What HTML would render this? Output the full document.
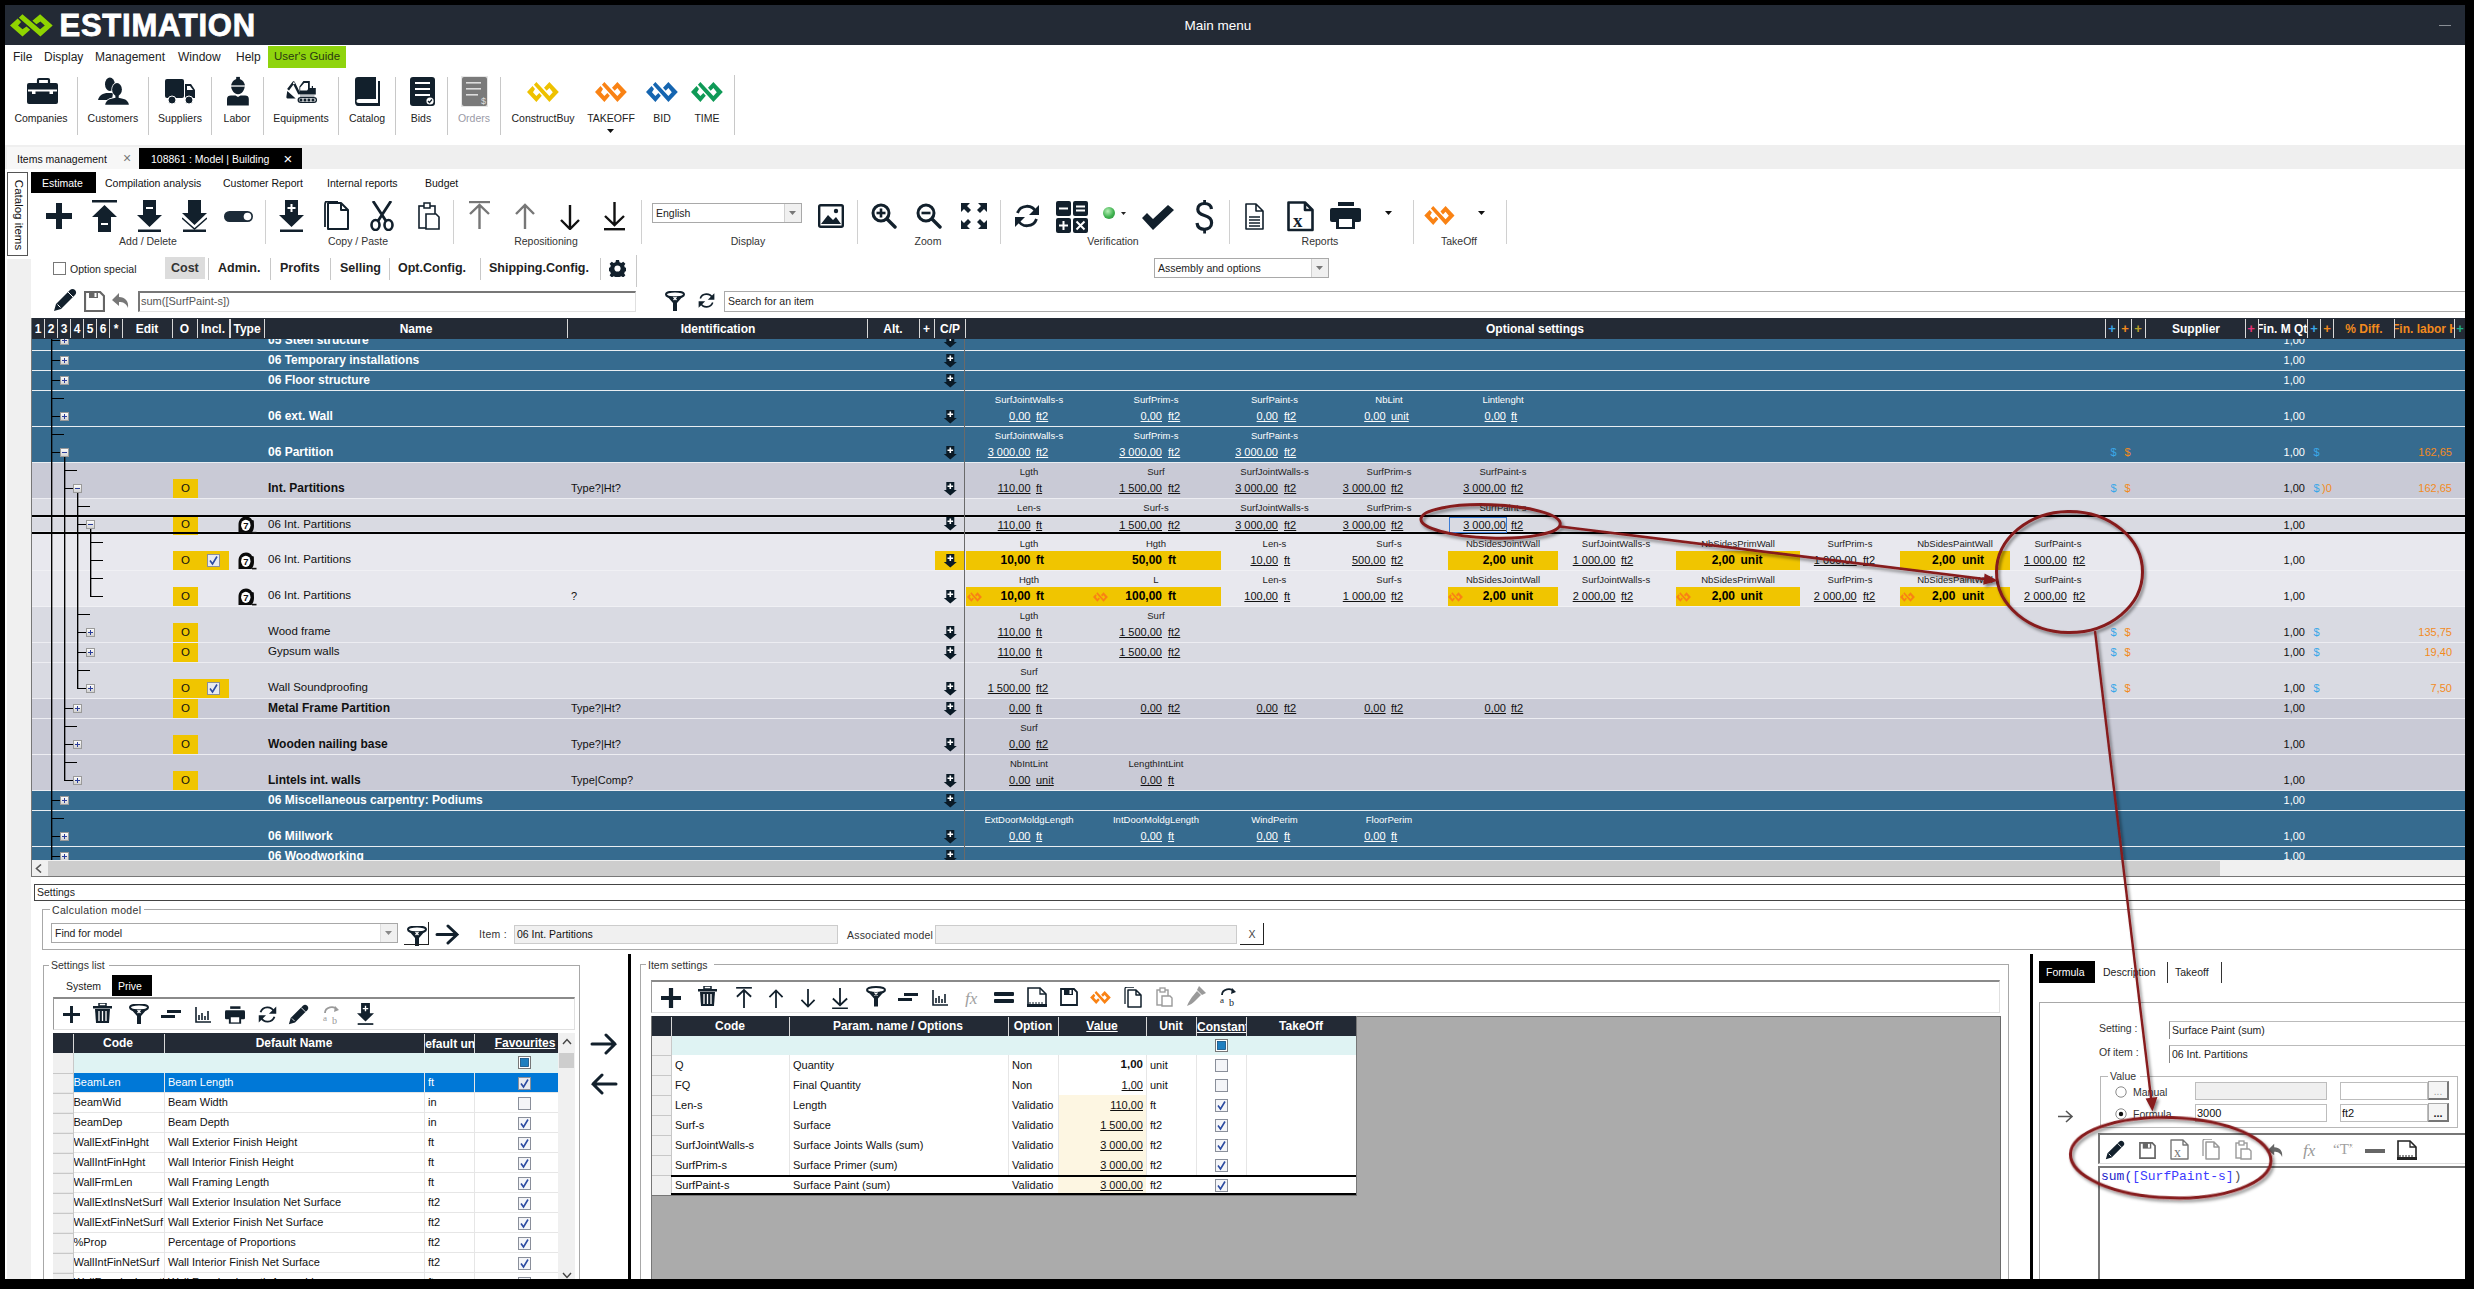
<!DOCTYPE html>
<html><head><meta charset="utf-8"><title>Estimation</title><style>
html,body{margin:0;padding:0;}
body{width:2474px;height:1289px;position:relative;overflow:hidden;background:#000;font-family:"Liberation Sans",sans-serif;}
.t{position:absolute;white-space:pre;line-height:1;}
.r{position:absolute;}
.u{text-decoration:underline;text-underline-offset:1px;text-decoration-skip-ink:none;}
</style></head><body>
<div class="r" style="left:5px;top:5px;width:2460px;height:1274px;background:#fff;"></div>
<div class="r" style="left:5px;top:5px;width:2460px;height:40px;background:#232a35;"></div>
<svg class="r" style="left:10px;top:14px;" width="43" height="22.5" viewBox="0 0 43 22.5"><polygon fill="#8fd400" points="8.84,3.69 12.4,0.26 30.1,15.2 34.8,11.6 30.4,7.4 26.4,10.2 22.4,6.7 30.1,0.26 42.7,11.6 30.4,22.4"/><polygon fill="#8fd400" points="7.7,4.5 11.1,7.9 8.05,11.6 12.5,15.3 16.5,12.5 20.2,15.8 12.5,22.4 0,11.6"/></svg>
<div class="t " style="top:9.76px;font-size:31px;color:#fff;font-weight:bold;left:59.5px;letter-spacing:0.75px;-webkit-text-stroke:0.8px #fff;">ESTIMATION</div>
<div class="t " style="top:18.57px;font-size:13.5px;color:#fff;left:1118.00px;width:200px;text-align:center;">Main menu</div>
<div class="r" style="left:2439px;top:25px;width:12px;height:1px;background:#8a8f96;"></div>
<div class="t " style="top:50.84px;font-size:12px;color:#222;left:13px;">File</div>
<div class="t " style="top:50.84px;font-size:12px;color:#222;left:44px;">Display</div>
<div class="t " style="top:50.84px;font-size:12px;color:#222;left:95px;">Management</div>
<div class="t " style="top:50.84px;font-size:12px;color:#222;left:178px;">Window</div>
<div class="t " style="top:50.84px;font-size:12px;color:#222;left:236px;">Help</div>
<div class="r" style="left:268px;top:46px;width:78px;height:22px;background:#8fd40d;"></div>
<div class="t " style="top:51.27px;font-size:11.5px;color:#2a3a10;left:274px;">User's Guide</div>
<svg class="r" style="left:27px;top:79px;overflow:visible;" width="31" height="25" viewBox="0 0 31 25"><rect x="11" y="0" width="11" height="6" rx="1" fill="none" stroke="#12202c" stroke-width="2.2"/><rect x="0" y="4" width="31" height="21" rx="2" fill="#12202c"/><rect x="1" y="10.5" width="29" height="2" fill="#fff"/><rect x="5" y="12" width="3.5" height="3" fill="#fff"/><rect x="22.5" y="12" width="3.5" height="3" fill="#fff"/></svg>
<div class="t " style="top:113.11px;font-size:10.5px;color:#222;left:-19.00px;width:120px;text-align:center;">Companies</div>
<svg class="r" style="left:98px;top:77px;overflow:visible;" width="31" height="28" viewBox="0 0 31 28"><ellipse cx="11.9" cy="7.15" rx="4.9" ry="6.75" fill="#12202c"/><path d="M0,23 C1,18.5 5,16 10,16 L15,16 L14,23Z" fill="#12202c"/><ellipse cx="19" cy="12.5" rx="5.6" ry="7.2" fill="#fff"/><path d="M6.2,28.5 C7,22.5 11,20.2 19,20.2 C27,20.2 31,22.5 31.9,28.5Z" fill="#fff"/><ellipse cx="19" cy="12.5" rx="4.9" ry="6.5" fill="#12202c"/><rect x="17.4" y="17" width="3.3" height="5" fill="#12202c"/><path d="M7.2,27.7 C8,23 12,21 19,21 C26,21 30,23 30.9,27.7Z" fill="#12202c"/></svg>
<div class="t " style="top:113.11px;font-size:10.5px;color:#222;left:53.00px;width:120px;text-align:center;">Customers</div>
<svg class="r" style="left:165px;top:79px;overflow:visible;" width="31" height="26" viewBox="0 0 31 26"><rect x="0" y="0" width="19" height="19" rx="2" fill="#12202c"/><path d="M20,5 L26,5 L30,11 L30,19 L20,19Z" fill="#12202c"/><path d="M22,7 L25,7 L28,11 L22,11Z" fill="#fff"/><circle cx="7" cy="21" r="4" fill="#12202c" stroke="#fff" stroke-width="1"/><circle cx="24" cy="21" r="4" fill="#12202c" stroke="#fff" stroke-width="1"/></svg>
<div class="t " style="top:113.11px;font-size:10.5px;color:#222;left:120.00px;width:120px;text-align:center;">Suppliers</div>
<svg class="r" style="left:227px;top:76px;overflow:visible;" width="22" height="30" viewBox="0 0 22 30"><rect x="9.2" y="0.9" width="3.7" height="3" fill="#12202c"/><path d="M4.2,9.1 C5,5 8,2.7 11,2.7 C14,2.7 17,5 17.9,9.1Z" fill="#12202c"/><rect x="4.2" y="9.1" width="13.7" height="1.7" fill="#9aa0a6"/><path d="M4.2,11.1 L17.6,11.1 C17.4,14 15,18.3 11,18.3 C7,18.3 4.5,14 4.2,11.1Z" fill="#12202c"/><path d="M0,29.5 L0,23 C0,20.5 1.5,19.5 4,19.5 L8.5,19.5 L11,21 L13.5,19.5 L18,19.5 C20.5,19.5 21.8,20.5 21.8,23 L21.8,29.5Z" fill="#12202c"/></svg>
<div class="t " style="top:113.11px;font-size:10.5px;color:#222;left:177.00px;width:120px;text-align:center;">Labor</div>
<svg class="r" style="left:286px;top:80px;overflow:visible;" width="31" height="24" viewBox="0 0 31 24"><path d="M13.4,14.05 L7.6,2.4 L2.07,9.8" stroke="#12202c" stroke-width="2.4" fill="none" stroke-linejoin="round"/><circle cx="7.9" cy="3.3" r="1" fill="#fff"/><path d="M1.28,10.9 L9.7,18.5 L1.5,18.5 C0.5,18.5 0.2,17.5 0.5,16Z" fill="#12202c"/><path d="M17.4,1.1 L23.8,1.1 L23.8,8 L29.8,8 L29.8,14.6 L13.4,14.6 L13.4,6.4Z M18.2,3 L14.2,7.45 L14.2,10.6 L21.07,10.6 L22,9.3 L22,3Z" fill="#12202c" fill-rule="evenodd"/><rect x="25.8" y="6" width="1.2" height="2" fill="#12202c"/><rect x="14" y="15.6" width="14.5" height="0.9" fill="#5a6570"/><rect x="12.2" y="17.6" width="18.2" height="4.8" rx="2.4" fill="none" stroke="#12202c" stroke-width="1.3"/><circle cx="15" cy="20" r="1.6" fill="#12202c"/><circle cx="19" cy="20" r="1.6" fill="#12202c"/><circle cx="22.9" cy="20" r="1.6" fill="#12202c"/><circle cx="27" cy="20" r="1.6" fill="#12202c"/></svg>
<div class="t " style="top:113.11px;font-size:10.5px;color:#222;left:241.00px;width:120px;text-align:center;">Equipments</div>
<svg class="r" style="left:355px;top:77px;overflow:visible;" width="25" height="29" viewBox="0 0 25 29"><path d="M0,3 C0,1 1,0 3,0 L21,0 L21,22 L4,22 C2,22 1.5,23 1.5,24 C1.5,25 2,26 4,26 L23,26 L23,4 L25,4 L25,29 L3,29 C1,29 0,27 0,25Z" fill="#12202c"/></svg>
<div class="t " style="top:113.11px;font-size:10.5px;color:#222;left:307.00px;width:120px;text-align:center;">Catalog</div>
<svg class="r" style="left:410px;top:77px;overflow:visible;" width="25" height="29" viewBox="0 0 25 29"><rect x="0" y="0" width="25" height="29" rx="3" fill="#12202c"/><rect x="5" y="5" width="15" height="2" fill="#fff"/><rect x="5" y="11" width="15" height="2" fill="#fff"/><rect x="5" y="17" width="15" height="2" fill="#fff"/><circle cx="20" cy="24" r="3.6" fill="#fff"/><path d="M18,24 L19.5,25.5 L22,22.5" stroke="#12202c" stroke-width="1.2" fill="none"/></svg>
<div class="t " style="top:113.11px;font-size:10.5px;color:#222;left:361.00px;width:120px;text-align:center;">Bids</div>
<svg class="r" style="left:462px;top:77px;overflow:visible;" width="25" height="29" viewBox="0 0 25 29"><rect x="-1" y="-1" width="27" height="31" fill="#e6e6e6"/><rect x="0" y="0" width="25" height="29" rx="2" fill="#7a7a7a"/><rect x="4" y="5" width="15" height="1.6" fill="#ddd"/><rect x="4" y="11" width="15" height="1.6" fill="#ddd"/><rect x="4" y="17" width="12" height="1.6" fill="#ddd"/><text x="19" y="27" font-size="9" fill="#ddd" font-family="Liberation Sans">$</text></svg>
<div class="t " style="top:113.11px;font-size:10.5px;color:#9a9aa6;left:414.00px;width:120px;text-align:center;">Orders</div>
<div class="r" style="left:77px;top:77px;width:1px;height:58px;background:#c8c8c8;"></div>
<div class="r" style="left:148px;top:77px;width:1px;height:58px;background:#c8c8c8;"></div>
<div class="r" style="left:211px;top:77px;width:1px;height:58px;background:#c8c8c8;"></div>
<div class="r" style="left:263px;top:77px;width:1px;height:58px;background:#c8c8c8;"></div>
<div class="r" style="left:338px;top:77px;width:1px;height:58px;background:#c8c8c8;"></div>
<div class="r" style="left:395px;top:77px;width:1px;height:58px;background:#c8c8c8;"></div>
<div class="r" style="left:447px;top:77px;width:1px;height:58px;background:#c8c8c8;"></div>
<div class="r" style="left:500px;top:77px;width:1px;height:58px;background:#c8c8c8;"></div>
<svg class="r" style="left:527px;top:82px;" width="32" height="20" viewBox="0 0 32 20"><polygon fill="#eec100" points="6.93,2.72 9.38,0 22.4,14.0 25.8,10.3 22.4,6.11 19.7,8.83 17.0,5.84 22.4,0 31.8,10.05 22.4,19.97"/><polygon fill="#eec100" points="5.57,4.08 8.0,6.93 5.98,10.2 9.38,14.0 12.36,11.0 14.8,13.7 9.38,19.97 0,10.05"/></svg>
<div class="t " style="top:113.11px;font-size:10.5px;color:#222;left:483.00px;width:120px;text-align:center;">ConstructBuy</div>
<svg class="r" style="left:595px;top:82px;" width="32" height="20" viewBox="0 0 32 20"><polygon fill="#f98214" points="6.93,2.72 9.38,0 22.4,14.0 25.8,10.3 22.4,6.11 19.7,8.83 17.0,5.84 22.4,0 31.8,10.05 22.4,19.97"/><polygon fill="#f98214" points="5.57,4.08 8.0,6.93 5.98,10.2 9.38,14.0 12.36,11.0 14.8,13.7 9.38,19.97 0,10.05"/></svg>
<div class="t " style="top:113.11px;font-size:10.5px;color:#222;left:551.00px;width:120px;text-align:center;">TAKEOFF</div>
<svg class="r" style="left:646px;top:82px;" width="32" height="20" viewBox="0 0 32 20"><polygon fill="#1565b0" points="6.93,2.72 9.38,0 22.4,14.0 25.8,10.3 22.4,6.11 19.7,8.83 17.0,5.84 22.4,0 31.8,10.05 22.4,19.97"/><polygon fill="#1565b0" points="5.57,4.08 8.0,6.93 5.98,10.2 9.38,14.0 12.36,11.0 14.8,13.7 9.38,19.97 0,10.05"/></svg>
<div class="t " style="top:113.11px;font-size:10.5px;color:#222;left:602.00px;width:120px;text-align:center;">BID</div>
<svg class="r" style="left:691px;top:82px;" width="32" height="20" viewBox="0 0 32 20"><polygon fill="#0f9a57" points="6.93,2.72 9.38,0 22.4,14.0 25.8,10.3 22.4,6.11 19.7,8.83 17.0,5.84 22.4,0 31.8,10.05 22.4,19.97"/><polygon fill="#0f9a57" points="5.57,4.08 8.0,6.93 5.98,10.2 9.38,14.0 12.36,11.0 14.8,13.7 9.38,19.97 0,10.05"/></svg>
<div class="t " style="top:113.11px;font-size:10.5px;color:#222;left:647.00px;width:120px;text-align:center;">TIME</div>
<svg class="r" style="left:607px;top:129px;" width="7" height="4" viewBox="0 0 7 4"><path d="M0,0 L7,0 L3.5,4Z" fill="#111"/></svg>
<div class="r" style="left:734px;top:75px;width:1px;height:60px;background:#c8c8c8;"></div>
<div class="r" style="left:5px;top:145px;width:2460px;height:24px;background:#efefef;"></div>
<div class="r" style="left:7px;top:147px;width:132px;height:22px;background:#f7f7f7;"></div>
<div class="t " style="top:154.11px;font-size:10.5px;color:#111;left:17px;">Items management</div>
<div class="t " style="top:151.15px;font-size:14px;color:#777;left:117.00px;width:20px;text-align:center;">×</div>
<div class="r" style="left:139px;top:148px;width:163px;height:21px;background:#000;"></div>
<div class="t " style="top:154.11px;font-size:10.5px;color:#fff;left:151px;">108861 : Model | Building</div>
<div class="t " style="top:151.30px;font-size:15px;color:#fff;left:278.00px;width:20px;text-align:center;">×</div>
<div class="r" style="left:5px;top:169px;width:26px;height:1110px;background:#fff;"></div>
<div class="r" style="left:7px;top:259px;width:24px;height:1020px;background:#f0f0f0;"></div>
<div class="r" style="left:7px;top:172px;width:21px;height:84px;background:#fff;box-sizing:border-box;border:1px solid #555;"></div>
<div class="t" style="left:-22px;top:209px;width:80px;height:12px;font-size:11.5px;color:#111;transform:rotate(90deg);text-align:center;">Catalog items</div>
<div class="r" style="left:31px;top:172px;width:65px;height:21px;background:#000;"></div>
<div class="t " style="top:178.11px;font-size:10.5px;color:#fff;left:42px;">Estimate</div>
<div class="t " style="top:178.11px;font-size:10.5px;color:#111;left:105px;">Compilation analysis</div>
<div class="t " style="top:178.11px;font-size:10.5px;color:#111;left:223px;">Customer Report</div>
<div class="t " style="top:178.11px;font-size:10.5px;color:#111;left:327px;">Internal reports</div>
<div class="t " style="top:178.11px;font-size:10.5px;color:#111;left:425px;">Budget</div>
<svg class="r" style="left:46px;top:203px;" width="26" height="26" viewBox="0 0 26 26"><path d="M10.0,0 h6 v10.0 h10.0 v6 h-10.0 v10.0 h-6 v-10.0 h-10.0 v-6 h10.0Z" fill="#12202c"/></svg>
<svg class="r" style="left:92px;top:200px;" width="25" height="32" viewBox="0 0 25 32"><rect x="0" y="0" width="25" height="2.5" fill="#12202c"/><path d="M12.5,5 L25,17 L19,17 L19,32 L6,32 L6,17 L0,17Z" fill="#12202c"/><rect x="9" y="23" width="7" height="2" fill="#fff"/></svg>
<svg class="r" style="left:137px;top:200px;" width="25" height="32" viewBox="0 0 25 32"><path d="M6,0 L19,0 L19,15 L25,15 L12.5,27 L0,15 L6,15Z" fill="#12202c"/><rect x="9" y="7" width="7" height="2" fill="#fff"/><rect x="1" y="29.5" width="23" height="2.5" fill="#12202c"/></svg>
<svg class="r" style="left:182px;top:200px;" width="25" height="32" viewBox="0 0 25 32"><path d="M6,0 L19,0 L19,13 L25,13 L12.5,25 L0,13 L6,13Z" fill="#12202c"/><path d="M0,18 L12.5,29 L25,18" stroke="#12202c" stroke-width="1.5" fill="none"/><rect x="1" y="29.5" width="23" height="2.5" fill="#12202c"/></svg>
<svg class="r" style="left:224px;top:211px;" width="29" height="11" viewBox="0 0 29 11"><rect x="0" y="0" width="29" height="11" rx="5.5" fill="#1c2b38"/><circle cx="23.5" cy="5.5" r="3.8" fill="#fff"/></svg>
<div class="t " style="top:236.11px;font-size:10.5px;color:#333;left:88.00px;width:120px;text-align:center;">Add / Delete</div>
<div class="r" style="left:265px;top:200px;width:1px;height:44px;background:#d0d0d0;"></div>
<svg class="r" style="left:279px;top:200px;" width="25" height="32" viewBox="0 0 25 32"><path d="M6,0 L19,0 L19,15 L25,15 L12.5,27 L0,15 L6,15Z" fill="#12202c"/><path d="M11.5,4 h2 v3 h3 v2 h-3 v3 h-2 v-3 h-3 v-2 h3Z" fill="#fff"/><rect x="1" y="29.5" width="23" height="2.5" fill="#12202c"/></svg>
<svg class="r" style="left:324px;top:201px;" width="25" height="30" viewBox="0 0 25 30"><path d="M4,2 L4,28 L24,28 L24,9 L17,2Z M17,2 L17,9 L24,9" stroke="#12202c" stroke-width="2" fill="#fff" stroke-linejoin="round"/><path d="M1,26 L1,4 C1,1 2,0 4,0 L14,0" stroke="#12202c" stroke-width="1.8" fill="none"/></svg>
<svg class="r" style="left:370px;top:201px;" width="24" height="30" viewBox="0 0 24 30"><path d="M3,0 L16,20 M21,0 L8,20" stroke="#12202c" stroke-width="2.8" fill="none"/><ellipse cx="5.5" cy="24" rx="4" ry="5" stroke="#12202c" stroke-width="2.6" fill="none"/><ellipse cx="18.5" cy="24" rx="4" ry="5" stroke="#12202c" stroke-width="2.6" fill="none"/></svg>
<svg class="r" style="left:418px;top:202px;" width="22" height="28" viewBox="0 0 22 28"><rect x="1" y="4" width="16" height="22" stroke="#12202c" stroke-width="1.6" fill="none"/><rect x="6" y="1" width="6" height="5" stroke="#12202c" stroke-width="1.5" fill="#fff"/><path d="M8,12 L8,27 L21,27 L21,15 L18,12Z" stroke="#12202c" stroke-width="1.6" fill="#fff"/></svg>
<div class="t " style="top:236.11px;font-size:10.5px;color:#333;left:298.00px;width:120px;text-align:center;">Copy / Paste</div>
<div class="r" style="left:453px;top:200px;width:1px;height:44px;background:#d0d0d0;"></div>
<svg class="r" style="left:469px;top:201px;" width="21" height="29" viewBox="0 0 21 29"><rect x="0" y="0" width="21" height="2.2" fill="#777"/><path d="M10.5,4 L10.5,28 M1,13 L10.5,4 L20,13" stroke="#777" stroke-width="2.4" fill="none"/></svg>
<svg class="r" style="left:515px;top:203px;" width="20" height="27" viewBox="0 0 20 27"><path d="M10,2 L10,26 M1,11 L10,2 L19,11" stroke="#777" stroke-width="2.4" fill="none"/></svg>
<svg class="r" style="left:560px;top:205px;" width="20" height="25" viewBox="0 0 20 25"><path d="M10,0 L10,24 M1,15 L10,24 L19,15" stroke="#111" stroke-width="2.4" fill="none"/></svg>
<svg class="r" style="left:604px;top:202px;" width="21" height="29" viewBox="0 0 21 29"><path d="M10.5,0 L10.5,23 M1,14 L10.5,23 L20,14" stroke="#111" stroke-width="2.4" fill="none"/><rect x="0" y="26" width="21" height="2.4" fill="#111"/></svg>
<div class="t " style="top:236.11px;font-size:10.5px;color:#333;left:486.00px;width:120px;text-align:center;">Repositioning</div>
<div class="r" style="left:641px;top:200px;width:1px;height:44px;background:#d0d0d0;"></div>
<div class="r" style="left:652px;top:203px;width:150px;height:20px;background:#fff;box-sizing:border-box;border:1px solid #a9a9a9;"></div>
<div class="r" style="left:784px;top:204px;width:16px;height:18px;background:#f0f0f0;border-left:1px solid #d0d0d0;"></div>
<svg class="r" style="left:789px;top:211px;" width="7" height="4" viewBox="0 0 7 4"><path d="M0,0 L7,0 L3.5,4Z" fill="#777"/></svg>
<div class="t " style="top:208.11px;font-size:10.5px;color:#222;left:656px;">English</div>
<svg class="r" style="left:818px;top:204px;" width="26" height="24" viewBox="0 0 26 24"><rect x="1.2" y="1.2" width="23.6" height="21.6" rx="1.5" stroke="#12202c" stroke-width="2.4" fill="none"/><path d="M3,20 L10,11 L15,16 L18,13 L23,20Z" fill="#12202c"/><circle cx="18" cy="7" r="2.2" fill="#12202c"/></svg>
<div class="t " style="top:236.11px;font-size:10.5px;color:#333;left:688.00px;width:120px;text-align:center;">Display</div>
<div class="r" style="left:857px;top:200px;width:1px;height:44px;background:#d0d0d0;"></div>
<svg class="r" style="left:871px;top:203px;" width="26" height="26" viewBox="0 0 26 26"><circle cx="10" cy="10" r="8" stroke="#12202c" stroke-width="3" fill="none"/><path d="M16,16 L24,24" stroke="#12202c" stroke-width="3.4" stroke-linecap="round"/><rect x="5.5" y="8.7" width="9" height="2.6" fill="#12202c"/><rect x="8.7" y="5.5" width="2.6" height="9" fill="#12202c"/></svg>
<svg class="r" style="left:916px;top:203px;" width="26" height="26" viewBox="0 0 26 26"><circle cx="10" cy="10" r="8" stroke="#12202c" stroke-width="3" fill="none"/><path d="M16,16 L24,24" stroke="#12202c" stroke-width="3.4" stroke-linecap="round"/><rect x="5.5" y="8.7" width="9" height="2.6" fill="#12202c"/></svg>
<svg class="r" style="left:961px;top:203px;" width="26" height="26" viewBox="0 0 26 26"><path d="M0,0 L9,0 L6,3 L10,7 L7,10 L3,6 L0,9Z" fill="#12202c"/><path d="M26,0 L17,0 L20,3 L16,7 L19,10 L23,6 L26,9Z" fill="#12202c"/><path d="M0,26 L9,26 L6,23 L10,19 L7,16 L3,20 L0,17Z" fill="#12202c"/><path d="M26,26 L17,26 L20,23 L16,19 L19,16 L23,20 L26,17Z" fill="#12202c"/></svg>
<div class="t " style="top:236.11px;font-size:10.5px;color:#333;left:868.00px;width:120px;text-align:center;">Zoom</div>
<div class="r" style="left:1000px;top:200px;width:1px;height:44px;background:#d0d0d0;"></div>
<svg class="r" style="left:1014px;top:203px;" width="26" height="26" viewBox="0 0 26 26"><path d="M22,9 A10,10 0 0 0 3.5,10" stroke="#12202c" stroke-width="2.8" fill="none"/><path d="M25,2 L25,12 L15,12Z" fill="#12202c"/><path d="M4,17 A10,10 0 0 0 22.5,16" stroke="#12202c" stroke-width="2.8" fill="none"/><path d="M1,24 L1,14 L11,14Z" fill="#12202c"/></svg>
<svg class="r" style="left:1056px;top:201px;" width="32" height="32" viewBox="0 0 32 32"><rect x="0" y="0" width="15" height="15" rx="2" fill="#12202c"/><rect x="17" y="0" width="15" height="15" rx="2" fill="#12202c"/><rect x="0" y="17" width="15" height="15" rx="2" fill="#12202c"/><rect x="17" y="17" width="15" height="15" rx="2" fill="#12202c"/><rect x="3" y="6.5" width="9" height="2" fill="#fff"/><rect x="20" y="4.5" width="9" height="2" fill="#fff"/><rect x="20" y="8.5" width="9" height="2" fill="#fff"/><rect x="3" y="23.5" width="9" height="2" fill="#fff"/><rect x="6.5" y="20" width="2" height="9" fill="#fff"/><path d="M20.5,20.5 L28.5,28.5 M28.5,20.5 L20.5,28.5" stroke="#fff" stroke-width="2"/></svg>
<div class="r" style="left:1103px;top:207px;width:12px;height:12px;border-radius:50%;background:radial-gradient(circle at 40% 35%,#b8f0b8,#3fb24f 55%,#2b8a3a);"></div>
<svg class="r" style="left:1121px;top:212px;" width="5" height="3" viewBox="0 0 5 3"><path d="M0,0 L5,0 L2.5,3Z" fill="#222"/></svg>
<svg class="r" style="left:1142px;top:204px;" width="32" height="27" viewBox="0 0 32 27"><path d="M0,14 L5,9 L11,15 L26,1 L32,6 L11,26Z" fill="#12202c"/></svg>
<svg class="r" style="left:1195px;top:200px;" width="20" height="34" viewBox="0 0 20 34"><path d="M16.5,9 C16,5 13,3.5 9.5,3.5 C5.5,3.5 2.8,5.5 2.8,9.2 C2.8,13 6,14.5 9.5,15.5 C13.5,16.6 16.6,18.3 16.6,22.8 C16.6,27 13.5,29.3 9.5,29.3 C5.5,29.3 2.5,27.3 2,23" stroke="#12202c" stroke-width="3.2" fill="none"/><rect x="8.2" y="0" width="2.8" height="4" fill="#12202c"/><rect x="8.2" y="29" width="2.8" height="4.5" fill="#12202c"/></svg>
<div class="t " style="top:236.11px;font-size:10.5px;color:#333;left:1053.00px;width:120px;text-align:center;">Verification</div>
<div class="r" style="left:1229px;top:200px;width:1px;height:44px;background:#d0d0d0;"></div>
<svg class="r" style="left:1245px;top:203px;" width="20" height="28" viewBox="0 0 20 28"><path d="M1,1 L1,26 L18,26 L18,8 L11,1Z M11,1 L11,8 L18,8" stroke="#12202c" stroke-width="1.6" fill="none" stroke-linejoin="round"/><path d="M4,14 h11 M4,17 h11 M4,20 h11 M4,23 h11" stroke="#12202c" stroke-width="1.3"/></svg>
<svg class="r" style="left:1287px;top:201px;" width="27" height="31" viewBox="0 0 27 31"><path d="M1.5,1.5 L1.5,29 L25.5,29 L25.5,9 L18,1.5Z M18,1.5 L18,9 L25.5,9" stroke="#12202c" stroke-width="2.6" fill="none" stroke-linejoin="round"/><text x="6" y="26" font-size="19" font-weight="bold" font-family="Liberation Serif" fill="#12202c">x</text></svg>
<svg class="r" style="left:1330px;top:202px;" width="31" height="27" viewBox="0 0 31 27"><rect x="8" y="0" width="16" height="4" fill="#12202c"/><rect x="0" y="6" width="31" height="14" rx="2" fill="#12202c"/><rect x="6" y="14" width="19" height="13" fill="#12202c"/><rect x="9" y="17" width="13" height="8" fill="#fff"/></svg>
<svg class="r" style="left:1385px;top:211px;" width="7" height="4" viewBox="0 0 7 4"><path d="M0,0 L7,0 L3.5,4Z" fill="#111"/></svg>
<div class="t " style="top:236.11px;font-size:10.5px;color:#333;left:1260.00px;width:120px;text-align:center;">Reports</div>
<div class="r" style="left:1413px;top:200px;width:1px;height:44px;background:#d0d0d0;"></div>
<svg class="r" style="left:1424px;top:206px;" width="31" height="19" viewBox="0 0 32 20"><polygon fill="#f98214" points="6.93,2.72 9.38,0 22.4,14.0 25.8,10.3 22.4,6.11 19.7,8.83 17.0,5.84 22.4,0 31.8,10.05 22.4,19.97"/><polygon fill="#f98214" points="5.57,4.08 8.0,6.93 5.98,10.2 9.38,14.0 12.36,11.0 14.8,13.7 9.38,19.97 0,10.05"/></svg>
<svg class="r" style="left:1478px;top:211px;" width="7" height="4" viewBox="0 0 7 4"><path d="M0,0 L7,0 L3.5,4Z" fill="#111"/></svg>
<div class="t " style="top:236.11px;font-size:10.5px;color:#333;left:1399.00px;width:120px;text-align:center;">TakeOff</div>
<div class="r" style="left:1506px;top:200px;width:1px;height:44px;background:#d0d0d0;"></div>
<div class="r" style="left:53px;top:262px;width:13px;height:13px;background:#fff;box-sizing:border-box;border:1px solid #777;"></div>
<div class="t " style="top:264.11px;font-size:10.5px;color:#222;left:70px;">Option special</div>
<div class="r" style="left:165px;top:257px;width:40px;height:22px;background:#dcdcdc;"></div>
<div class="t " style="top:262.42px;font-size:12.5px;color:#333;font-weight:bold;left:171px;">Cost</div>
<div class="t " style="top:262.42px;font-size:12.5px;color:#222;font-weight:bold;left:218px;">Admin.</div>
<div class="t " style="top:262.42px;font-size:12.5px;color:#222;font-weight:bold;left:280px;">Profits</div>
<div class="t " style="top:262.42px;font-size:12.5px;color:#222;font-weight:bold;left:340px;">Selling</div>
<div class="t " style="top:262.42px;font-size:12.5px;color:#222;font-weight:bold;left:398px;">Opt.Config.</div>
<div class="t " style="top:262.42px;font-size:12.5px;color:#222;font-weight:bold;left:489px;">Shipping.Config.</div>
<div class="r" style="left:208px;top:258px;width:1px;height:22px;background:#c8c8c8;"></div>
<div class="r" style="left:270px;top:258px;width:1px;height:22px;background:#c8c8c8;"></div>
<div class="r" style="left:330px;top:258px;width:1px;height:22px;background:#c8c8c8;"></div>
<div class="r" style="left:389px;top:258px;width:1px;height:22px;background:#c8c8c8;"></div>
<div class="r" style="left:480px;top:258px;width:1px;height:22px;background:#c8c8c8;"></div>
<div class="r" style="left:600px;top:258px;width:1px;height:22px;background:#c8c8c8;"></div>
<svg class="r" style="left:609px;top:260px;" width="17" height="17" viewBox="0 0 22 22"><path d="M9,0 h4 l0.6,2.8 2.4,1 2.4,-1.6 2.8,2.8 -1.6,2.4 1,2.4 2.8,0.6 v4 l-2.8,0.6 -1,2.4 1.6,2.4 -2.8,2.8 -2.4,-1.6 -2.4,1 -0.6,2.8 h-4 l-0.6,-2.8 -2.4,-1 -2.4,1.6 -2.8,-2.8 1.6,-2.4 -1,-2.4 -2.8,-0.6 v-4 l2.8,-0.6 1,-2.4 -1.6,-2.4 2.8,-2.8 2.4,1.6 2.4,-1Z" fill="#12202c"/><circle cx="11" cy="11" r="4" fill="#fff"/></svg>
<div class="r" style="left:636px;top:255px;width:1px;height:32px;background:#c8c8c8;"></div>
<div class="r" style="left:1154px;top:258px;width:175px;height:20px;background:#fff;box-sizing:border-box;border:1px solid #a9a9a9;"></div>
<div class="r" style="left:1311px;top:259px;width:16px;height:18px;background:#f0f0f0;border-left:1px solid #d0d0d0;"></div>
<svg class="r" style="left:1316px;top:266px;" width="7" height="4" viewBox="0 0 7 4"><path d="M0,0 L7,0 L3.5,4Z" fill="#777"/></svg>
<div class="t " style="top:263.11px;font-size:10.5px;color:#222;left:1158px;">Assembly and options</div>
<svg class="r" style="left:53px;top:288px;" width="24" height="24" viewBox="0 0 24 24"><path d="M1,23 L3,16 L17,2 C18.5,0.5 20.5,0.5 22,2 C23.5,3.5 23.5,5.5 22,7 L8,21Z" fill="#12202c"/><path d="M4.5,16.5 L7.5,19.5" stroke="#fff" stroke-width="1"/><path d="M15,4 L20,9" stroke="#fff" stroke-width="1"/></svg>
<svg class="r" style="left:84px;top:291px;" width="21" height="21" viewBox="0 0 21 21"><path d="M1,1 L16,1 L20,5 L20,20 L1,20Z" stroke="#666" stroke-width="2.2" fill="none"/><rect x="5" y="1" width="9" height="6" fill="#666"/><rect x="10.5" y="2" width="2" height="4" fill="#fff"/></svg>
<svg class="r" style="left:112px;top:292px;" width="17" height="16" viewBox="0 0 17 16"><path d="M0,8 L7,1 L7,5 C13,5 17,9 16,16 C14,11 11,10 7,10 L7,14Z" fill="#777"/></svg>
<div class="r" style="left:138px;top:291px;width:498px;height:21px;background:#fff;box-sizing:border-box;border-top:2px solid #777;border-left:2px solid #777;border-bottom:1px solid #e0e0e0;border-right:1px solid #e0e0e0;"></div>
<div class="t " style="top:295.69px;font-size:11px;color:#555;left:141px;">sum([SurfPaint-s])</div>
<svg class="r" style="left:665px;top:291px;" width="20" height="21" viewBox="0 0 20 21"><ellipse cx="10" cy="3.5" rx="9" ry="3" stroke="#12202c" stroke-width="2" fill="none"/><path d="M1,4 L8,12 L8,20 L12,20 L12,12 L19,4 C17,6 3,6 1,4Z" fill="#12202c"/><path d="M8.5,6 L11.5,9 M11.5,6 L8.5,9" stroke="#fff" stroke-width="1.2"/></svg>
<svg class="r" style="left:698px;top:292px;" width="17" height="17" viewBox="0 0 26 26"><path d="M22,9 A10,10 0 0 0 3.5,10" stroke="#12202c" stroke-width="2.4" fill="none"/><path d="M25,2 L25,12 L15,12Z" fill="#12202c"/><path d="M4,17 A10,10 0 0 0 22.5,16" stroke="#12202c" stroke-width="2.4" fill="none"/><path d="M1,24 L1,14 L11,14Z" fill="#12202c"/></svg>
<div class="r" style="left:724px;top:291px;width:1741px;height:21px;background:#fff;box-sizing:border-box;border:1px solid #aaa;border-right:none;"></div>
<div class="t " style="top:296.11px;font-size:10.5px;color:#222;left:728px;">Search for an item</div>
<svg width="0" height="0" style="position:absolute"><defs><linearGradient id="pbg" x1="0" y1="0" x2="0" y2="1"><stop offset="0" stop-color="#ffffff"/><stop offset="1" stop-color="#cfcfcf"/></linearGradient></defs></svg>
<div class="r" style="left:31px;top:318px;width:2434px;height:21px;background:#232a35;"></div>
<div class="r" style="left:44px;top:319px;width:1px;height:19px;background:#d8d8d8;"></div>
<div class="r" style="left:57px;top:319px;width:1px;height:19px;background:#d8d8d8;"></div>
<div class="r" style="left:70px;top:319px;width:1px;height:19px;background:#d8d8d8;"></div>
<div class="r" style="left:83px;top:319px;width:1px;height:19px;background:#d8d8d8;"></div>
<div class="r" style="left:96px;top:319px;width:1px;height:19px;background:#d8d8d8;"></div>
<div class="r" style="left:109px;top:319px;width:1px;height:19px;background:#d8d8d8;"></div>
<div class="r" style="left:122px;top:319px;width:1px;height:19px;background:#d8d8d8;"></div>
<div class="r" style="left:172px;top:319px;width:1px;height:19px;background:#d8d8d8;"></div>
<div class="r" style="left:197px;top:319px;width:1px;height:19px;background:#d8d8d8;"></div>
<div class="r" style="left:229px;top:319px;width:1px;height:19px;background:#d8d8d8;"></div>
<div class="r" style="left:264px;top:319px;width:1px;height:19px;background:#d8d8d8;"></div>
<div class="r" style="left:567px;top:319px;width:1px;height:19px;background:#d8d8d8;"></div>
<div class="r" style="left:867px;top:319px;width:1px;height:19px;background:#d8d8d8;"></div>
<div class="r" style="left:919px;top:319px;width:1px;height:19px;background:#d8d8d8;"></div>
<div class="r" style="left:934px;top:319px;width:1px;height:19px;background:#d8d8d8;"></div>
<div class="r" style="left:965px;top:319px;width:1px;height:19px;background:#d8d8d8;"></div>
<div class="r" style="left:2105px;top:319px;width:1px;height:19px;background:#d8d8d8;"></div>
<div class="r" style="left:2118px;top:319px;width:1px;height:19px;background:#d8d8d8;"></div>
<div class="r" style="left:2131px;top:319px;width:1px;height:19px;background:#d8d8d8;"></div>
<div class="r" style="left:2145px;top:319px;width:1px;height:19px;background:#d8d8d8;"></div>
<div class="r" style="left:2245px;top:319px;width:1px;height:19px;background:#d8d8d8;"></div>
<div class="r" style="left:2258px;top:319px;width:1px;height:19px;background:#d8d8d8;"></div>
<div class="r" style="left:2307px;top:319px;width:1px;height:19px;background:#d8d8d8;"></div>
<div class="r" style="left:2320px;top:319px;width:1px;height:19px;background:#d8d8d8;"></div>
<div class="r" style="left:2333px;top:319px;width:1px;height:19px;background:#d8d8d8;"></div>
<div class="r" style="left:2394px;top:319px;width:1px;height:19px;background:#d8d8d8;"></div>
<div class="r" style="left:2454px;top:319px;width:1px;height:19px;background:#d8d8d8;"></div>
<div class="r" style="left:230px;top:319px;width:1px;height:19px;background:#d8d8d8;"></div>
<div class="t " style="top:322.84px;font-size:12px;color:#fff;font-weight:bold;left:-62.00px;width:200px;text-align:center;">1</div>
<div class="t " style="top:322.84px;font-size:12px;color:#fff;font-weight:bold;left:-49.00px;width:200px;text-align:center;">2</div>
<div class="t " style="top:322.84px;font-size:12px;color:#fff;font-weight:bold;left:-36.00px;width:200px;text-align:center;">3</div>
<div class="t " style="top:322.84px;font-size:12px;color:#fff;font-weight:bold;left:-23.00px;width:200px;text-align:center;">4</div>
<div class="t " style="top:322.84px;font-size:12px;color:#fff;font-weight:bold;left:-10.00px;width:200px;text-align:center;">5</div>
<div class="t " style="top:322.84px;font-size:12px;color:#fff;font-weight:bold;left:3.00px;width:200px;text-align:center;">6</div>
<div class="t " style="top:322.84px;font-size:12px;color:#fff;font-weight:bold;left:16.00px;width:200px;text-align:center;">*</div>
<div class="t " style="top:322.84px;font-size:12px;color:#fff;font-weight:bold;left:47.00px;width:200px;text-align:center;">Edit</div>
<div class="t " style="top:322.84px;font-size:12px;color:#fff;font-weight:bold;left:84.50px;width:200px;text-align:center;">O</div>
<div class="t " style="top:322.84px;font-size:12px;color:#fff;font-weight:bold;left:113.00px;width:200px;text-align:center;">Incl.</div>
<div class="t " style="top:322.84px;font-size:12px;color:#fff;font-weight:bold;left:147.00px;width:200px;text-align:center;">Type</div>
<div class="t " style="top:322.84px;font-size:12px;color:#fff;font-weight:bold;left:316.00px;width:200px;text-align:center;">Name</div>
<div class="t " style="top:322.84px;font-size:12px;color:#fff;font-weight:bold;left:618.00px;width:200px;text-align:center;">Identification</div>
<div class="t " style="top:322.84px;font-size:12px;color:#fff;font-weight:bold;left:793.00px;width:200px;text-align:center;">Alt.</div>
<div class="t " style="top:322.84px;font-size:12px;color:#fff;font-weight:bold;left:826.50px;width:200px;text-align:center;">+</div>
<div class="t " style="top:322.84px;font-size:12px;color:#fff;font-weight:bold;left:850.00px;width:200px;text-align:center;">C/P</div>
<div class="t " style="top:322.84px;font-size:12px;color:#fff;font-weight:bold;left:1435.00px;width:200px;text-align:center;">Optional settings</div>
<div class="t " style="top:322.84px;font-size:12px;color:#fff;font-weight:bold;left:2096.00px;width:200px;text-align:center;">Supplier</div>
<div class="t " style="top:322.00px;font-size:13px;color:#3aa7e8;font-weight:bold;left:2102.00px;width:20px;text-align:center;">+</div>
<div class="t " style="top:322.00px;font-size:13px;color:#f28a1e;font-weight:bold;left:2115.00px;width:20px;text-align:center;">+</div>
<div class="t " style="top:322.00px;font-size:13px;color:#b8a02a;font-weight:bold;left:2128.00px;width:20px;text-align:center;">+</div>
<div class="t " style="top:322.00px;font-size:13px;color:#e8337a;font-weight:bold;left:2241.00px;width:20px;text-align:center;">+</div>
<div class="t " style="top:322.00px;font-size:13px;color:#3aa7e8;font-weight:bold;left:2304.00px;width:20px;text-align:center;">+</div>
<div class="t " style="top:322.00px;font-size:13px;color:#f28a1e;font-weight:bold;left:2317.00px;width:20px;text-align:center;">+</div>
<div class="t " style="top:322.00px;font-size:13px;color:#20b08a;font-weight:bold;left:2450.00px;width:20px;text-align:center;">+</div>
<div class="r" style="left:2259px;top:318px;width:48px;height:20px;overflow:hidden;"><div class="t" style="left:-3px;top:4.8px;font-size:12px;font-weight:bold;color:#fff;">Fin. M Qt</div></div>
<div class="t " style="top:322.84px;font-size:12px;color:#f28a1e;font-weight:bold;left:2314.00px;width:100px;text-align:center;">% Diff.</div>
<div class="r" style="left:2395px;top:318px;width:59px;height:20px;overflow:hidden;"><div class="t" style="left:-3px;top:4.8px;font-size:12px;font-weight:bold;color:#f28a1e;">Fin. labor Hrs</div></div>
<div class="r" style="left:0;top:339px;width:2465px;height:521px;overflow:hidden;"><div class="r" style="left:0;top:-339px;width:2465px;height:900px;">
<div class="r" style="left:31px;top:331px;width:2434px;height:19px;background:#366b8f;"></div>
<div class="r" style="left:31px;top:350px;width:2434px;height:1px;background:#e9eef2;"></div>
<div class="r" style="left:31px;top:351px;width:2434px;height:19px;background:#366b8f;"></div>
<div class="r" style="left:31px;top:370px;width:2434px;height:1px;background:#e9eef2;"></div>
<div class="r" style="left:31px;top:371px;width:2434px;height:19px;background:#366b8f;"></div>
<div class="r" style="left:31px;top:390px;width:2434px;height:1px;background:#e9eef2;"></div>
<div class="r" style="left:31px;top:391px;width:2434px;height:35px;background:#366b8f;"></div>
<div class="r" style="left:31px;top:426px;width:2434px;height:1px;background:#e9eef2;"></div>
<div class="r" style="left:31px;top:427px;width:2434px;height:35px;background:#366b8f;"></div>
<div class="r" style="left:31px;top:462px;width:2434px;height:1px;background:#e9eef2;"></div>
<div class="r" style="left:31px;top:463px;width:2434px;height:35px;background:#c9cad6;"></div>
<div class="r" style="left:31px;top:498px;width:2434px;height:1px;background:#ededf2;"></div>
<div class="r" style="left:31px;top:499px;width:2434px;height:34px;background:#d9dae2;"></div>
<div class="r" style="left:31px;top:533px;width:2434px;height:1px;background:#ededf2;"></div>
<div class="r" style="left:31px;top:515px;width:2434px;height:2px;background:#000;"></div>
<div class="r" style="left:31px;top:517px;width:2434px;height:1px;background:#e4e5ec;"></div>
<div class="r" style="left:31px;top:531px;width:2434px;height:1px;background:#e4e5ec;"></div>
<div class="r" style="left:31px;top:532px;width:2434px;height:2px;background:#000;"></div>
<div class="r" style="left:31px;top:534px;width:2434px;height:1px;background:#e8e8ee;"></div>
<div class="r" style="left:31px;top:535px;width:2434px;height:35px;background:#e8e8ee;"></div>
<div class="r" style="left:31px;top:570px;width:2434px;height:1px;background:#f0f0f4;"></div>
<div class="r" style="left:31px;top:571px;width:2434px;height:35px;background:#e8e8ee;"></div>
<div class="r" style="left:31px;top:606px;width:2434px;height:1px;background:#f0f0f4;"></div>
<div class="r" style="left:31px;top:607px;width:2434px;height:35px;background:#d9dae2;"></div>
<div class="r" style="left:31px;top:642px;width:2434px;height:1px;background:#ededf2;"></div>
<div class="r" style="left:31px;top:643px;width:2434px;height:19px;background:#d9dae2;"></div>
<div class="r" style="left:31px;top:662px;width:2434px;height:1px;background:#ededf2;"></div>
<div class="r" style="left:31px;top:663px;width:2434px;height:35px;background:#d9dae2;"></div>
<div class="r" style="left:31px;top:698px;width:2434px;height:1px;background:#ededf2;"></div>
<div class="r" style="left:31px;top:699px;width:2434px;height:19px;background:#c9cad6;"></div>
<div class="r" style="left:31px;top:718px;width:2434px;height:1px;background:#ededf2;"></div>
<div class="r" style="left:31px;top:719px;width:2434px;height:35px;background:#c9cad6;"></div>
<div class="r" style="left:31px;top:754px;width:2434px;height:1px;background:#ededf2;"></div>
<div class="r" style="left:31px;top:755px;width:2434px;height:35px;background:#c9cad6;"></div>
<div class="r" style="left:31px;top:790px;width:2434px;height:1px;background:#ededf2;"></div>
<div class="r" style="left:31px;top:791px;width:2434px;height:19px;background:#366b8f;"></div>
<div class="r" style="left:31px;top:810px;width:2434px;height:1px;background:#e9eef2;"></div>
<div class="r" style="left:31px;top:811px;width:2434px;height:35px;background:#366b8f;"></div>
<div class="r" style="left:31px;top:846px;width:2434px;height:1px;background:#e9eef2;"></div>
<div class="r" style="left:31px;top:847px;width:2434px;height:19px;background:#366b8f;"></div>
<div class="r" style="left:31px;top:866px;width:2434px;height:1px;background:#e9eef2;"></div>
<div class="r" style="left:51px;top:331px;width:1px;height:529px;background:#000;"></div>
<div class="r" style="left:52px;top:331px;width:1px;height:529px;background:rgba(0,0,0,0.35);"></div>
<div class="r" style="left:64px;top:457px;width:1px;height:324px;background:#000;"></div>
<div class="r" style="left:65px;top:457px;width:1px;height:324px;background:rgba(0,0,0,0.35);"></div>
<div class="r" style="left:77px;top:493px;width:1px;height:196px;background:#000;"></div>
<div class="r" style="left:78px;top:493px;width:1px;height:196px;background:rgba(0,0,0,0.35);"></div>
<div class="r" style="left:90px;top:529px;width:1px;height:67px;background:#000;"></div>
<div class="r" style="left:91px;top:529px;width:1px;height:67px;background:rgba(0,0,0,0.35);"></div>
<div class="r" style="left:51px;top:340px;width:13px;height:1px;background:#000;"></div>
<svg class="r" style="left:60px;top:336px;" width="9" height="9" viewBox="0 0 9 9"><rect x="0.5" y="0.5" width="8" height="8" fill="url(#pbg)" stroke="#9a9a9a"/><rect x="2" y="4" width="5" height="1" fill="#2b3d9a"/><rect x="4" y="2" width="1" height="5" fill="#2b3d9a"/></svg>
<div class="t " style="top:333.84px;font-size:12px;color:#fff;font-weight:bold;left:268px;">05 Steel structure</div>
<svg class="r" style="left:943.5px;top:334px;overflow:visible;" width="13" height="14" viewBox="0 0 13 14"><path d="M2.3,0 L10.3,0 L10.3,8 L12.8,8 L6.3,13.6 L-0.2,8 L2.3,8Z" fill="#0a1a26"/><path d="M5.5,1.5 h1.6 v2 h2 v1.6 h-2 v2 h-1.6 v-2 h-2 v-1.6 h2Z" fill="#fff"/></svg>
<div class="t " style="top:334.69px;font-size:11px;color:#fff;left:2205.00px;width:100px;text-align:right;">1,00</div>
<div class="r" style="left:51px;top:360px;width:13px;height:1px;background:#000;"></div>
<svg class="r" style="left:60px;top:356px;" width="9" height="9" viewBox="0 0 9 9"><rect x="0.5" y="0.5" width="8" height="8" fill="url(#pbg)" stroke="#9a9a9a"/><rect x="2" y="4" width="5" height="1" fill="#2b3d9a"/><rect x="4" y="2" width="1" height="5" fill="#2b3d9a"/></svg>
<div class="t " style="top:353.84px;font-size:12px;color:#fff;font-weight:bold;left:268px;">06 Temporary installations</div>
<svg class="r" style="left:943.5px;top:354px;overflow:visible;" width="13" height="14" viewBox="0 0 13 14"><path d="M2.3,0 L10.3,0 L10.3,8 L12.8,8 L6.3,13.6 L-0.2,8 L2.3,8Z" fill="#0a1a26"/><path d="M5.5,1.5 h1.6 v2 h2 v1.6 h-2 v2 h-1.6 v-2 h-2 v-1.6 h2Z" fill="#fff"/></svg>
<div class="t " style="top:354.69px;font-size:11px;color:#fff;left:2205.00px;width:100px;text-align:right;">1,00</div>
<div class="r" style="left:51px;top:380px;width:13px;height:1px;background:#000;"></div>
<svg class="r" style="left:60px;top:376px;" width="9" height="9" viewBox="0 0 9 9"><rect x="0.5" y="0.5" width="8" height="8" fill="url(#pbg)" stroke="#9a9a9a"/><rect x="2" y="4" width="5" height="1" fill="#2b3d9a"/><rect x="4" y="2" width="1" height="5" fill="#2b3d9a"/></svg>
<div class="t " style="top:373.84px;font-size:12px;color:#fff;font-weight:bold;left:268px;">06 Floor structure</div>
<svg class="r" style="left:943.5px;top:374px;overflow:visible;" width="13" height="14" viewBox="0 0 13 14"><path d="M2.3,0 L10.3,0 L10.3,8 L12.8,8 L6.3,13.6 L-0.2,8 L2.3,8Z" fill="#0a1a26"/><path d="M5.5,1.5 h1.6 v2 h2 v1.6 h-2 v2 h-1.6 v-2 h-2 v-1.6 h2Z" fill="#fff"/></svg>
<div class="t " style="top:374.69px;font-size:11px;color:#fff;left:2205.00px;width:100px;text-align:right;">1,00</div>
<div class="r" style="left:51px;top:398px;width:13px;height:1px;background:#000;"></div>
<div class="r" style="left:51px;top:416px;width:13px;height:1px;background:#000;"></div>
<svg class="r" style="left:60px;top:412px;" width="9" height="9" viewBox="0 0 9 9"><rect x="0.5" y="0.5" width="8" height="8" fill="url(#pbg)" stroke="#9a9a9a"/><rect x="2" y="4" width="5" height="1" fill="#2b3d9a"/><rect x="4" y="2" width="1" height="5" fill="#2b3d9a"/></svg>
<div class="t " style="top:409.84px;font-size:12px;color:#fff;font-weight:bold;left:268px;">06 ext. Wall</div>
<svg class="r" style="left:943.5px;top:409.5px;overflow:visible;" width="13" height="14" viewBox="0 0 13 14"><path d="M2.3,0 L10.3,0 L10.3,8 L12.8,8 L6.3,13.6 L-0.2,8 L2.3,8Z" fill="#0a1a26"/><path d="M5.5,1.5 h1.6 v2 h2 v1.6 h-2 v2 h-1.6 v-2 h-2 v-1.6 h2Z" fill="#fff"/></svg>
<div class="t " style="top:394.96px;font-size:9.5px;color:#fff;left:929.00px;width:200px;text-align:center;">SurfJointWalls-s</div>
<div class="t u" style="top:410.69px;font-size:11px;color:#fff;left:830.50px;width:200px;text-align:right;">0,00</div>
<div class="t u" style="top:410.69px;font-size:11px;color:#fff;left:1036px;">ft2</div>
<div class="t " style="top:394.96px;font-size:9.5px;color:#fff;left:1056.00px;width:200px;text-align:center;">SurfPrim-s</div>
<div class="t u" style="top:410.69px;font-size:11px;color:#fff;left:962.00px;width:200px;text-align:right;">0,00</div>
<div class="t u" style="top:410.69px;font-size:11px;color:#fff;left:1168px;">ft2</div>
<div class="t " style="top:394.96px;font-size:9.5px;color:#fff;left:1174.50px;width:200px;text-align:center;">SurfPaint-s</div>
<div class="t u" style="top:410.69px;font-size:11px;color:#fff;left:1078.00px;width:200px;text-align:right;">0,00</div>
<div class="t u" style="top:410.69px;font-size:11px;color:#fff;left:1284px;">ft2</div>
<div class="t " style="top:394.96px;font-size:9.5px;color:#fff;left:1289.00px;width:200px;text-align:center;">NbLint</div>
<div class="t u" style="top:410.69px;font-size:11px;color:#fff;left:1185.60px;width:200px;text-align:right;">0,00</div>
<div class="t u" style="top:410.69px;font-size:11px;color:#fff;left:1391px;">unit</div>
<div class="t " style="top:394.96px;font-size:9.5px;color:#fff;left:1403.00px;width:200px;text-align:center;">Lintlenght</div>
<div class="t u" style="top:410.69px;font-size:11px;color:#fff;left:1306.00px;width:200px;text-align:right;">0,00</div>
<div class="t u" style="top:410.69px;font-size:11px;color:#fff;left:1511px;">ft</div>
<div class="t " style="top:410.69px;font-size:11px;color:#fff;left:2205.00px;width:100px;text-align:right;">1,00</div>
<div class="r" style="left:51px;top:434px;width:13px;height:1px;background:#000;"></div>
<div class="r" style="left:51px;top:452px;width:13px;height:1px;background:#000;"></div>
<svg class="r" style="left:60px;top:448px;" width="9" height="9" viewBox="0 0 9 9"><rect x="0.5" y="0.5" width="8" height="8" fill="url(#pbg)" stroke="#9a9a9a"/><rect x="2" y="4" width="5" height="1" fill="#2b3d9a"/></svg>
<div class="t " style="top:445.84px;font-size:12px;color:#fff;font-weight:bold;left:268px;">06 Partition</div>
<svg class="r" style="left:943.5px;top:445.5px;overflow:visible;" width="13" height="14" viewBox="0 0 13 14"><path d="M2.3,0 L10.3,0 L10.3,8 L12.8,8 L6.3,13.6 L-0.2,8 L2.3,8Z" fill="#0a1a26"/><path d="M5.5,1.5 h1.6 v2 h2 v1.6 h-2 v2 h-1.6 v-2 h-2 v-1.6 h2Z" fill="#fff"/></svg>
<div class="t " style="top:430.96px;font-size:9.5px;color:#fff;left:929.00px;width:200px;text-align:center;">SurfJointWalls-s</div>
<div class="t u" style="top:446.69px;font-size:11px;color:#fff;left:830.50px;width:200px;text-align:right;">3 000,00</div>
<div class="t u" style="top:446.69px;font-size:11px;color:#fff;left:1036px;">ft2</div>
<div class="t " style="top:430.96px;font-size:9.5px;color:#fff;left:1056.00px;width:200px;text-align:center;">SurfPrim-s</div>
<div class="t u" style="top:446.69px;font-size:11px;color:#fff;left:962.00px;width:200px;text-align:right;">3 000,00</div>
<div class="t u" style="top:446.69px;font-size:11px;color:#fff;left:1168px;">ft2</div>
<div class="t " style="top:430.96px;font-size:9.5px;color:#fff;left:1174.50px;width:200px;text-align:center;">SurfPaint-s</div>
<div class="t u" style="top:446.69px;font-size:11px;color:#fff;left:1078.00px;width:200px;text-align:right;">3 000,00</div>
<div class="t u" style="top:446.69px;font-size:11px;color:#fff;left:1284px;">ft2</div>
<div class="t " style="top:446.69px;font-size:11px;color:#fff;left:2205.00px;width:100px;text-align:right;">1,00</div>
<div class="t " style="top:446.69px;font-size:11px;color:#3aa7e8;left:2103.50px;width:20px;text-align:center;">$</div>
<div class="t " style="top:446.69px;font-size:11px;color:#f28a1e;left:2117.50px;width:20px;text-align:center;">$</div>
<div class="t " style="top:446.69px;font-size:11px;color:#f28a1e;left:2352.00px;width:100px;text-align:right;">162,65</div>
<div class="t " style="top:446.69px;font-size:11px;color:#3aa7e8;left:2306.50px;width:20px;text-align:center;">$</div>
<div class="r" style="left:64px;top:470px;width:13px;height:1px;background:#000;"></div>
<div class="r" style="left:64px;top:488px;width:13px;height:1px;background:#000;"></div>
<svg class="r" style="left:73px;top:484px;" width="9" height="9" viewBox="0 0 9 9"><rect x="0.5" y="0.5" width="8" height="8" fill="url(#pbg)" stroke="#9a9a9a"/><rect x="2" y="4" width="5" height="1" fill="#2b3d9a"/></svg>
<div class="r" style="left:173px;top:479px;width:25px;height:19px;background:#f0c500;"></div>
<div class="t " style="top:483.27px;font-size:11.5px;color:#111;left:170.50px;width:30px;text-align:center;">O</div>
<div class="t " style="top:481.84px;font-size:12px;color:#111;font-weight:bold;left:268px;">Int. Partitions</div>
<div class="t " style="top:482.69px;font-size:11px;color:#111;left:571px;">Type?|Ht?</div>
<svg class="r" style="left:943.5px;top:481.5px;overflow:visible;" width="13" height="14" viewBox="0 0 13 14"><path d="M2.3,0 L10.3,0 L10.3,8 L12.8,8 L6.3,13.6 L-0.2,8 L2.3,8Z" fill="#0a1a26"/><path d="M5.5,1.5 h1.6 v2 h2 v1.6 h-2 v2 h-1.6 v-2 h-2 v-1.6 h2Z" fill="#fff"/></svg>
<div class="t " style="top:466.96px;font-size:9.5px;color:#222;left:929.00px;width:200px;text-align:center;">Lgth</div>
<div class="t u" style="top:482.69px;font-size:11px;color:#111;left:830.50px;width:200px;text-align:right;">110,00</div>
<div class="t u" style="top:482.69px;font-size:11px;color:#111;left:1036px;">ft</div>
<div class="t " style="top:466.96px;font-size:9.5px;color:#222;left:1056.00px;width:200px;text-align:center;">Surf</div>
<div class="t u" style="top:482.69px;font-size:11px;color:#111;left:962.00px;width:200px;text-align:right;">1 500,00</div>
<div class="t u" style="top:482.69px;font-size:11px;color:#111;left:1168px;">ft2</div>
<div class="t " style="top:466.96px;font-size:9.5px;color:#222;left:1174.50px;width:200px;text-align:center;">SurfJointWalls-s</div>
<div class="t u" style="top:482.69px;font-size:11px;color:#111;left:1078.00px;width:200px;text-align:right;">3 000,00</div>
<div class="t u" style="top:482.69px;font-size:11px;color:#111;left:1284px;">ft2</div>
<div class="t " style="top:466.96px;font-size:9.5px;color:#222;left:1289.00px;width:200px;text-align:center;">SurfPrim-s</div>
<div class="t u" style="top:482.69px;font-size:11px;color:#111;left:1185.60px;width:200px;text-align:right;">3 000,00</div>
<div class="t u" style="top:482.69px;font-size:11px;color:#111;left:1391px;">ft2</div>
<div class="t " style="top:466.96px;font-size:9.5px;color:#222;left:1403.00px;width:200px;text-align:center;">SurfPaint-s</div>
<div class="t u" style="top:482.69px;font-size:11px;color:#111;left:1306.00px;width:200px;text-align:right;">3 000,00</div>
<div class="t u" style="top:482.69px;font-size:11px;color:#111;left:1511px;">ft2</div>
<div class="t " style="top:482.69px;font-size:11px;color:#111;left:2205.00px;width:100px;text-align:right;">1,00</div>
<div class="t " style="top:482.69px;font-size:11px;color:#3aa7e8;left:2103.50px;width:20px;text-align:center;">$</div>
<div class="t " style="top:482.69px;font-size:11px;color:#f28a1e;left:2117.50px;width:20px;text-align:center;">$</div>
<div class="t " style="top:482.69px;font-size:11px;color:#f28a1e;left:2352.00px;width:100px;text-align:right;">162,65</div>
<div class="t " style="top:482.69px;font-size:11px;color:#3aa7e8;left:2306.50px;width:20px;text-align:center;">$</div>
<div class="t " style="top:482.69px;font-size:11px;color:#f28a1e;left:2322px;">)0</div>
<div class="r" style="left:77px;top:506px;width:13px;height:1px;background:#000;"></div>
<div class="r" style="left:77px;top:524px;width:13px;height:1px;background:#000;"></div>
<svg class="r" style="left:86px;top:520px;" width="9" height="9" viewBox="0 0 9 9"><rect x="0.5" y="0.5" width="8" height="8" fill="url(#pbg)" stroke="#9a9a9a"/><rect x="2" y="4" width="5" height="1" fill="#2b3d9a"/></svg>
<div class="r" style="left:173px;top:517px;width:25px;height:15px;background:#f0c500;"></div>
<div class="r" style="left:173px;top:534px;width:25px;height:1px;background:#f0c500;"></div>
<div class="t " style="top:519.27px;font-size:11.5px;color:#111;left:170.50px;width:30px;text-align:center;">O</div>
<svg class="r" style="left:237px;top:516px;" width="20" height="18" viewBox="0 0 20 18"><path d="M1.5,17 L1.5,9 C1.5,3.5 5,0.5 9,0.5 C12,0.5 14,2 15,4 L16.8,4.5 L17,10 C17,13 16,15 14.5,17Z" fill="#0a0a0a"/><ellipse cx="8.8" cy="9.3" rx="4.7" ry="5.6" fill="#fff"/><text x="6.2" y="13.2" font-size="9.5" font-weight="bold" font-family="Liberation Sans" fill="#111">7</text><rect x="15" y="15.8" width="4.5" height="1.6" fill="#111"/></svg>
<div class="t " style="top:519.27px;font-size:11.5px;color:#111;left:268px;">06 Int. Partitions</div>
<svg class="r" style="left:943.5px;top:516.5px;overflow:visible;" width="13" height="14" viewBox="0 0 13 14"><path d="M2.3,0 L10.3,0 L10.3,8 L12.8,8 L6.3,13.6 L-0.2,8 L2.3,8Z" fill="#0a1a26"/><path d="M5.5,1.5 h1.6 v2 h2 v1.6 h-2 v2 h-1.6 v-2 h-2 v-1.6 h2Z" fill="#fff"/></svg>
<div class="t " style="top:502.96px;font-size:9.5px;color:#222;left:929.00px;width:200px;text-align:center;">Len-s</div>
<div class="t u" style="top:519.69px;font-size:11px;color:#111;left:830.50px;width:200px;text-align:right;">110,00</div>
<div class="t u" style="top:519.69px;font-size:11px;color:#111;left:1036px;">ft</div>
<div class="t " style="top:502.96px;font-size:9.5px;color:#222;left:1056.00px;width:200px;text-align:center;">Surf-s</div>
<div class="t u" style="top:519.69px;font-size:11px;color:#111;left:962.00px;width:200px;text-align:right;">1 500,00</div>
<div class="t u" style="top:519.69px;font-size:11px;color:#111;left:1168px;">ft2</div>
<div class="t " style="top:502.96px;font-size:9.5px;color:#222;left:1174.50px;width:200px;text-align:center;">SurfJointWalls-s</div>
<div class="t u" style="top:519.69px;font-size:11px;color:#111;left:1078.00px;width:200px;text-align:right;">3 000,00</div>
<div class="t u" style="top:519.69px;font-size:11px;color:#111;left:1284px;">ft2</div>
<div class="t " style="top:502.96px;font-size:9.5px;color:#222;left:1289.00px;width:200px;text-align:center;">SurfPrim-s</div>
<div class="t u" style="top:519.69px;font-size:11px;color:#111;left:1185.60px;width:200px;text-align:right;">3 000,00</div>
<div class="t u" style="top:519.69px;font-size:11px;color:#111;left:1391px;">ft2</div>
<div class="t " style="top:502.96px;font-size:9.5px;color:#222;left:1403.00px;width:200px;text-align:center;">SurfPaint-s</div>
<div class="t u" style="top:519.69px;font-size:11px;color:#111;left:1306.00px;width:200px;text-align:right;">3 000,00</div>
<div class="t u" style="top:519.69px;font-size:11px;color:#111;left:1511px;">ft2</div>
<div class="t " style="top:519.69px;font-size:11px;color:#111;left:2205.00px;width:100px;text-align:right;">1,00</div>
<div class="r" style="left:1449px;top:517px;width:58px;height:16px;background:none;box-sizing:border-box;border:1px solid #3a7bd5;"></div>
<div class="r" style="left:90px;top:542px;width:13px;height:1px;background:#000;"></div>
<div class="r" style="left:90px;top:560px;width:13px;height:1px;background:#000;"></div>
<div class="r" style="left:173px;top:551px;width:56px;height:19px;background:#f0c500;"></div>
<div class="t " style="top:555.27px;font-size:11.5px;color:#111;left:170.50px;width:30px;text-align:center;">O</div>
<svg class="r" style="left:207px;top:554px;" width="13" height="13" viewBox="0 0 13 13"><rect x="0.5" y="0.5" width="12" height="12" fill="#e8eaf0" stroke="#8a8f9a"/><path d="M3,6.5 L5.5,10 L10,2.5" stroke="#2b4aa0" stroke-width="1.6" fill="none"/></svg>
<svg class="r" style="left:237px;top:552px;" width="20" height="18" viewBox="0 0 20 18"><path d="M1.5,17 L1.5,9 C1.5,3.5 5,0.5 9,0.5 C12,0.5 14,2 15,4 L16.8,4.5 L17,10 C17,13 16,15 14.5,17Z" fill="#0a0a0a"/><ellipse cx="8.8" cy="9.3" rx="4.7" ry="5.6" fill="#fff"/><text x="6.2" y="13.2" font-size="9.5" font-weight="bold" font-family="Liberation Sans" fill="#111">7</text><rect x="15" y="15.8" width="4.5" height="1.6" fill="#111"/></svg>
<div class="t " style="top:554.27px;font-size:11.5px;color:#111;left:268px;">06 Int. Partitions</div>
<div class="r" style="left:935px;top:551px;width:29px;height:19px;background:#f0c500;"></div>
<svg class="r" style="left:943.5px;top:553.5px;overflow:visible;" width="13" height="14" viewBox="0 0 13 14"><path d="M2.3,0 L10.3,0 L10.3,8 L12.8,8 L6.3,13.6 L-0.2,8 L2.3,8Z" fill="#0a1a26"/><path d="M5.5,1.5 h1.6 v2 h2 v1.6 h-2 v2 h-1.6 v-2 h-2 v-1.6 h2Z" fill="#fff"/></svg>
<div class="r" style="left:966px;top:551px;width:255px;height:19px;background:#f0c500;"></div>
<div class="r" style="left:1448px;top:551px;width:110px;height:19px;background:#f0c500;"></div>
<div class="r" style="left:1676px;top:551px;width:124px;height:19px;background:#f0c500;"></div>
<div class="r" style="left:1900px;top:551px;width:110px;height:19px;background:#f0c500;"></div>
<div class="t " style="top:538.96px;font-size:9.5px;color:#222;left:929.00px;width:200px;text-align:center;">Lgth</div>
<div class="t " style="top:553.84px;font-size:12px;color:#000;font-weight:bold;left:830.50px;width:200px;text-align:right;">10,00</div>
<div class="t " style="top:553.84px;font-size:12px;color:#000;font-weight:bold;left:1036px;">ft</div>
<div class="t " style="top:538.96px;font-size:9.5px;color:#222;left:1056.00px;width:200px;text-align:center;">Hgth</div>
<div class="t " style="top:553.84px;font-size:12px;color:#000;font-weight:bold;left:962.00px;width:200px;text-align:right;">50,00</div>
<div class="t " style="top:553.84px;font-size:12px;color:#000;font-weight:bold;left:1168px;">ft</div>
<div class="t " style="top:538.96px;font-size:9.5px;color:#222;left:1174.50px;width:200px;text-align:center;">Len-s</div>
<div class="t u" style="top:554.69px;font-size:11px;color:#111;left:1078.00px;width:200px;text-align:right;">10,00</div>
<div class="t u" style="top:554.69px;font-size:11px;color:#111;left:1284px;">ft</div>
<div class="t " style="top:538.96px;font-size:9.5px;color:#222;left:1289.00px;width:200px;text-align:center;">Surf-s</div>
<div class="t u" style="top:554.69px;font-size:11px;color:#111;left:1185.60px;width:200px;text-align:right;">500,00</div>
<div class="t u" style="top:554.69px;font-size:11px;color:#111;left:1391px;">ft2</div>
<div class="t " style="top:538.96px;font-size:9.5px;color:#222;left:1403.00px;width:200px;text-align:center;">NbSidesJointWall</div>
<div class="t " style="top:553.84px;font-size:12px;color:#000;font-weight:bold;left:1306.00px;width:200px;text-align:right;">2,00</div>
<div class="t " style="top:553.84px;font-size:12px;color:#000;font-weight:bold;left:1511px;">unit</div>
<div class="t " style="top:538.96px;font-size:9.5px;color:#222;left:1516.00px;width:200px;text-align:center;">SurfJointWalls-s</div>
<div class="t u" style="top:554.69px;font-size:11px;color:#111;left:1415.50px;width:200px;text-align:right;">1 000,00</div>
<div class="t u" style="top:554.69px;font-size:11px;color:#111;left:1621px;">ft2</div>
<div class="t " style="top:538.96px;font-size:9.5px;color:#222;left:1638.00px;width:200px;text-align:center;">NbSidesPrimWall</div>
<div class="t " style="top:553.84px;font-size:12px;color:#000;font-weight:bold;left:1535.00px;width:200px;text-align:right;">2,00</div>
<div class="t " style="top:553.84px;font-size:12px;color:#000;font-weight:bold;left:1740.5px;">unit</div>
<div class="t " style="top:538.96px;font-size:9.5px;color:#222;left:1750.00px;width:200px;text-align:center;">SurfPrim-s</div>
<div class="t u" style="top:554.69px;font-size:11px;color:#111;left:1656.70px;width:200px;text-align:right;">1 000,00</div>
<div class="t u" style="top:554.69px;font-size:11px;color:#111;left:1863px;">ft2</div>
<div class="t " style="top:538.96px;font-size:9.5px;color:#222;left:1855.00px;width:200px;text-align:center;">NbSidesPaintWall</div>
<div class="t " style="top:553.84px;font-size:12px;color:#000;font-weight:bold;left:1755.40px;width:200px;text-align:right;">2,00</div>
<div class="t " style="top:553.84px;font-size:12px;color:#000;font-weight:bold;left:1962px;">unit</div>
<div class="t " style="top:538.96px;font-size:9.5px;color:#222;left:1958.00px;width:200px;text-align:center;">SurfPaint-s</div>
<div class="t u" style="top:554.69px;font-size:11px;color:#111;left:1866.80px;width:200px;text-align:right;">1 000,00</div>
<div class="t u" style="top:554.69px;font-size:11px;color:#111;left:2073px;">ft2</div>
<div class="t " style="top:554.69px;font-size:11px;color:#111;left:2205.00px;width:100px;text-align:right;">1,00</div>
<div class="r" style="left:90px;top:578px;width:13px;height:1px;background:#000;"></div>
<div class="r" style="left:90px;top:596px;width:13px;height:1px;background:#000;"></div>
<div class="r" style="left:173px;top:587px;width:25px;height:19px;background:#f0c500;"></div>
<div class="t " style="top:591.27px;font-size:11.5px;color:#111;left:170.50px;width:30px;text-align:center;">O</div>
<svg class="r" style="left:237px;top:588px;" width="20" height="18" viewBox="0 0 20 18"><path d="M1.5,17 L1.5,9 C1.5,3.5 5,0.5 9,0.5 C12,0.5 14,2 15,4 L16.8,4.5 L17,10 C17,13 16,15 14.5,17Z" fill="#0a0a0a"/><ellipse cx="8.8" cy="9.3" rx="4.7" ry="5.6" fill="#fff"/><text x="6.2" y="13.2" font-size="9.5" font-weight="bold" font-family="Liberation Sans" fill="#111">7</text><rect x="15" y="15.8" width="4.5" height="1.6" fill="#111"/></svg>
<div class="t " style="top:590.27px;font-size:11.5px;color:#111;left:268px;">06 Int. Partitions</div>
<div class="t " style="top:590.69px;font-size:11px;color:#111;left:571px;">?</div>
<svg class="r" style="left:943.5px;top:589.5px;overflow:visible;" width="13" height="14" viewBox="0 0 13 14"><path d="M2.3,0 L10.3,0 L10.3,8 L12.8,8 L6.3,13.6 L-0.2,8 L2.3,8Z" fill="#0a1a26"/><path d="M5.5,1.5 h1.6 v2 h2 v1.6 h-2 v2 h-1.6 v-2 h-2 v-1.6 h2Z" fill="#fff"/></svg>
<div class="r" style="left:966px;top:587px;width:255px;height:19px;background:#f0c500;"></div>
<div class="r" style="left:1448px;top:587px;width:110px;height:19px;background:#f0c500;"></div>
<div class="r" style="left:1676px;top:587px;width:124px;height:19px;background:#f0c500;"></div>
<div class="r" style="left:1900px;top:587px;width:110px;height:19px;background:#f0c500;"></div>
<div class="t " style="top:574.96px;font-size:9.5px;color:#222;left:929.00px;width:200px;text-align:center;">Hgth</div>
<svg class="r" style="left:967px;top:592px;" width="15" height="10" viewBox="0 0 32 20"><polygon fill="#f98214" points="6.93,2.72 9.38,0 22.4,14.0 25.8,10.3 22.4,6.11 19.7,8.83 17.0,5.84 22.4,0 31.8,10.05 22.4,19.97"/><polygon fill="#f98214" points="5.57,4.08 8.0,6.93 5.98,10.2 9.38,14.0 12.36,11.0 14.8,13.7 9.38,19.97 0,10.05"/></svg>
<div class="t " style="top:589.84px;font-size:12px;color:#000;font-weight:bold;left:830.50px;width:200px;text-align:right;">10,00</div>
<div class="t " style="top:589.84px;font-size:12px;color:#000;font-weight:bold;left:1036px;">ft</div>
<div class="t " style="top:574.96px;font-size:9.5px;color:#222;left:1056.00px;width:200px;text-align:center;">L</div>
<svg class="r" style="left:1093px;top:592px;" width="15" height="10" viewBox="0 0 32 20"><polygon fill="#f98214" points="6.93,2.72 9.38,0 22.4,14.0 25.8,10.3 22.4,6.11 19.7,8.83 17.0,5.84 22.4,0 31.8,10.05 22.4,19.97"/><polygon fill="#f98214" points="5.57,4.08 8.0,6.93 5.98,10.2 9.38,14.0 12.36,11.0 14.8,13.7 9.38,19.97 0,10.05"/></svg>
<div class="t " style="top:589.84px;font-size:12px;color:#000;font-weight:bold;left:962.00px;width:200px;text-align:right;">100,00</div>
<div class="t " style="top:589.84px;font-size:12px;color:#000;font-weight:bold;left:1168px;">ft</div>
<div class="t " style="top:574.96px;font-size:9.5px;color:#222;left:1174.50px;width:200px;text-align:center;">Len-s</div>
<div class="t u" style="top:590.69px;font-size:11px;color:#111;left:1078.00px;width:200px;text-align:right;">100,00</div>
<div class="t u" style="top:590.69px;font-size:11px;color:#111;left:1284px;">ft</div>
<div class="t " style="top:574.96px;font-size:9.5px;color:#222;left:1289.00px;width:200px;text-align:center;">Surf-s</div>
<div class="t u" style="top:590.69px;font-size:11px;color:#111;left:1185.60px;width:200px;text-align:right;">1 000,00</div>
<div class="t u" style="top:590.69px;font-size:11px;color:#111;left:1391px;">ft2</div>
<div class="t " style="top:574.96px;font-size:9.5px;color:#222;left:1403.00px;width:200px;text-align:center;">NbSidesJointWall</div>
<svg class="r" style="left:1448px;top:592px;" width="15" height="10" viewBox="0 0 32 20"><polygon fill="#f98214" points="6.93,2.72 9.38,0 22.4,14.0 25.8,10.3 22.4,6.11 19.7,8.83 17.0,5.84 22.4,0 31.8,10.05 22.4,19.97"/><polygon fill="#f98214" points="5.57,4.08 8.0,6.93 5.98,10.2 9.38,14.0 12.36,11.0 14.8,13.7 9.38,19.97 0,10.05"/></svg>
<div class="t " style="top:589.84px;font-size:12px;color:#000;font-weight:bold;left:1306.00px;width:200px;text-align:right;">2,00</div>
<div class="t " style="top:589.84px;font-size:12px;color:#000;font-weight:bold;left:1511px;">unit</div>
<div class="t " style="top:574.96px;font-size:9.5px;color:#222;left:1516.00px;width:200px;text-align:center;">SurfJointWalls-s</div>
<div class="t u" style="top:590.69px;font-size:11px;color:#111;left:1415.50px;width:200px;text-align:right;">2 000,00</div>
<div class="t u" style="top:590.69px;font-size:11px;color:#111;left:1621px;">ft2</div>
<div class="t " style="top:574.96px;font-size:9.5px;color:#222;left:1638.00px;width:200px;text-align:center;">NbSidesPrimWall</div>
<svg class="r" style="left:1676px;top:592px;" width="15" height="10" viewBox="0 0 32 20"><polygon fill="#f98214" points="6.93,2.72 9.38,0 22.4,14.0 25.8,10.3 22.4,6.11 19.7,8.83 17.0,5.84 22.4,0 31.8,10.05 22.4,19.97"/><polygon fill="#f98214" points="5.57,4.08 8.0,6.93 5.98,10.2 9.38,14.0 12.36,11.0 14.8,13.7 9.38,19.97 0,10.05"/></svg>
<div class="t " style="top:589.84px;font-size:12px;color:#000;font-weight:bold;left:1535.00px;width:200px;text-align:right;">2,00</div>
<div class="t " style="top:589.84px;font-size:12px;color:#000;font-weight:bold;left:1740.5px;">unit</div>
<div class="t " style="top:574.96px;font-size:9.5px;color:#222;left:1750.00px;width:200px;text-align:center;">SurfPrim-s</div>
<div class="t u" style="top:590.69px;font-size:11px;color:#111;left:1656.70px;width:200px;text-align:right;">2 000,00</div>
<div class="t u" style="top:590.69px;font-size:11px;color:#111;left:1863px;">ft2</div>
<div class="t " style="top:574.96px;font-size:9.5px;color:#222;left:1855.00px;width:200px;text-align:center;">NbSidesPaintWall</div>
<svg class="r" style="left:1900px;top:592px;" width="15" height="10" viewBox="0 0 32 20"><polygon fill="#f98214" points="6.93,2.72 9.38,0 22.4,14.0 25.8,10.3 22.4,6.11 19.7,8.83 17.0,5.84 22.4,0 31.8,10.05 22.4,19.97"/><polygon fill="#f98214" points="5.57,4.08 8.0,6.93 5.98,10.2 9.38,14.0 12.36,11.0 14.8,13.7 9.38,19.97 0,10.05"/></svg>
<div class="t " style="top:589.84px;font-size:12px;color:#000;font-weight:bold;left:1755.40px;width:200px;text-align:right;">2,00</div>
<div class="t " style="top:589.84px;font-size:12px;color:#000;font-weight:bold;left:1962px;">unit</div>
<div class="t " style="top:574.96px;font-size:9.5px;color:#222;left:1958.00px;width:200px;text-align:center;">SurfPaint-s</div>
<div class="t u" style="top:590.69px;font-size:11px;color:#111;left:1866.80px;width:200px;text-align:right;">2 000,00</div>
<div class="t u" style="top:590.69px;font-size:11px;color:#111;left:2073px;">ft2</div>
<div class="t " style="top:590.69px;font-size:11px;color:#111;left:2205.00px;width:100px;text-align:right;">1,00</div>
<div class="r" style="left:77px;top:614px;width:13px;height:1px;background:#000;"></div>
<div class="r" style="left:77px;top:632px;width:13px;height:1px;background:#000;"></div>
<svg class="r" style="left:86px;top:628px;" width="9" height="9" viewBox="0 0 9 9"><rect x="0.5" y="0.5" width="8" height="8" fill="url(#pbg)" stroke="#9a9a9a"/><rect x="2" y="4" width="5" height="1" fill="#2b3d9a"/><rect x="4" y="2" width="1" height="5" fill="#2b3d9a"/></svg>
<div class="r" style="left:173px;top:623px;width:25px;height:19px;background:#f0c500;"></div>
<div class="t " style="top:627.27px;font-size:11.5px;color:#111;left:170.50px;width:30px;text-align:center;">O</div>
<div class="t " style="top:626.27px;font-size:11.5px;color:#111;left:268px;">Wood frame</div>
<svg class="r" style="left:943.5px;top:625.5px;overflow:visible;" width="13" height="14" viewBox="0 0 13 14"><path d="M2.3,0 L10.3,0 L10.3,8 L12.8,8 L6.3,13.6 L-0.2,8 L2.3,8Z" fill="#0a1a26"/><path d="M5.5,1.5 h1.6 v2 h2 v1.6 h-2 v2 h-1.6 v-2 h-2 v-1.6 h2Z" fill="#fff"/></svg>
<div class="t " style="top:610.96px;font-size:9.5px;color:#222;left:929.00px;width:200px;text-align:center;">Lgth</div>
<div class="t u" style="top:626.69px;font-size:11px;color:#111;left:830.50px;width:200px;text-align:right;">110,00</div>
<div class="t u" style="top:626.69px;font-size:11px;color:#111;left:1036px;">ft</div>
<div class="t " style="top:610.96px;font-size:9.5px;color:#222;left:1056.00px;width:200px;text-align:center;">Surf</div>
<div class="t u" style="top:626.69px;font-size:11px;color:#111;left:962.00px;width:200px;text-align:right;">1 500,00</div>
<div class="t u" style="top:626.69px;font-size:11px;color:#111;left:1168px;">ft2</div>
<div class="t " style="top:626.69px;font-size:11px;color:#111;left:2205.00px;width:100px;text-align:right;">1,00</div>
<div class="t " style="top:626.69px;font-size:11px;color:#3aa7e8;left:2103.50px;width:20px;text-align:center;">$</div>
<div class="t " style="top:626.69px;font-size:11px;color:#f28a1e;left:2117.50px;width:20px;text-align:center;">$</div>
<div class="t " style="top:626.69px;font-size:11px;color:#f28a1e;left:2352.00px;width:100px;text-align:right;">135,75</div>
<div class="t " style="top:626.69px;font-size:11px;color:#3aa7e8;left:2306.50px;width:20px;text-align:center;">$</div>
<div class="r" style="left:77px;top:652px;width:13px;height:1px;background:#000;"></div>
<svg class="r" style="left:86px;top:648px;" width="9" height="9" viewBox="0 0 9 9"><rect x="0.5" y="0.5" width="8" height="8" fill="url(#pbg)" stroke="#9a9a9a"/><rect x="2" y="4" width="5" height="1" fill="#2b3d9a"/><rect x="4" y="2" width="1" height="5" fill="#2b3d9a"/></svg>
<div class="r" style="left:173px;top:643px;width:25px;height:19px;background:#f0c500;"></div>
<div class="t " style="top:647.27px;font-size:11.5px;color:#111;left:170.50px;width:30px;text-align:center;">O</div>
<div class="t " style="top:646.27px;font-size:11.5px;color:#111;left:268px;">Gypsum walls</div>
<svg class="r" style="left:943.5px;top:646px;overflow:visible;" width="13" height="14" viewBox="0 0 13 14"><path d="M2.3,0 L10.3,0 L10.3,8 L12.8,8 L6.3,13.6 L-0.2,8 L2.3,8Z" fill="#0a1a26"/><path d="M5.5,1.5 h1.6 v2 h2 v1.6 h-2 v2 h-1.6 v-2 h-2 v-1.6 h2Z" fill="#fff"/></svg>
<div class="t u" style="top:646.69px;font-size:11px;color:#111;left:830.50px;width:200px;text-align:right;">110,00</div>
<div class="t u" style="top:646.69px;font-size:11px;color:#111;left:1036px;">ft</div>
<div class="t u" style="top:646.69px;font-size:11px;color:#111;left:962.00px;width:200px;text-align:right;">1 500,00</div>
<div class="t u" style="top:646.69px;font-size:11px;color:#111;left:1168px;">ft2</div>
<div class="t " style="top:646.69px;font-size:11px;color:#111;left:2205.00px;width:100px;text-align:right;">1,00</div>
<div class="t " style="top:646.69px;font-size:11px;color:#3aa7e8;left:2103.50px;width:20px;text-align:center;">$</div>
<div class="t " style="top:646.69px;font-size:11px;color:#f28a1e;left:2117.50px;width:20px;text-align:center;">$</div>
<div class="t " style="top:646.69px;font-size:11px;color:#f28a1e;left:2352.00px;width:100px;text-align:right;">19,40</div>
<div class="t " style="top:646.69px;font-size:11px;color:#3aa7e8;left:2306.50px;width:20px;text-align:center;">$</div>
<div class="r" style="left:77px;top:670px;width:13px;height:1px;background:#000;"></div>
<div class="r" style="left:77px;top:688px;width:13px;height:1px;background:#000;"></div>
<svg class="r" style="left:86px;top:684px;" width="9" height="9" viewBox="0 0 9 9"><rect x="0.5" y="0.5" width="8" height="8" fill="url(#pbg)" stroke="#9a9a9a"/><rect x="2" y="4" width="5" height="1" fill="#2b3d9a"/><rect x="4" y="2" width="1" height="5" fill="#2b3d9a"/></svg>
<div class="r" style="left:173px;top:679px;width:56px;height:19px;background:#f0c500;"></div>
<div class="t " style="top:683.27px;font-size:11.5px;color:#111;left:170.50px;width:30px;text-align:center;">O</div>
<svg class="r" style="left:207px;top:682px;" width="13" height="13" viewBox="0 0 13 13"><rect x="0.5" y="0.5" width="12" height="12" fill="#e8eaf0" stroke="#8a8f9a"/><path d="M3,6.5 L5.5,10 L10,2.5" stroke="#2b4aa0" stroke-width="1.6" fill="none"/></svg>
<div class="t " style="top:682.27px;font-size:11.5px;color:#111;left:268px;">Wall Soundproofing</div>
<svg class="r" style="left:943.5px;top:681.5px;overflow:visible;" width="13" height="14" viewBox="0 0 13 14"><path d="M2.3,0 L10.3,0 L10.3,8 L12.8,8 L6.3,13.6 L-0.2,8 L2.3,8Z" fill="#0a1a26"/><path d="M5.5,1.5 h1.6 v2 h2 v1.6 h-2 v2 h-1.6 v-2 h-2 v-1.6 h2Z" fill="#fff"/></svg>
<div class="t " style="top:666.96px;font-size:9.5px;color:#222;left:929.00px;width:200px;text-align:center;">Surf</div>
<div class="t u" style="top:682.69px;font-size:11px;color:#111;left:830.50px;width:200px;text-align:right;">1 500,00</div>
<div class="t u" style="top:682.69px;font-size:11px;color:#111;left:1036px;">ft2</div>
<div class="t " style="top:682.69px;font-size:11px;color:#111;left:2205.00px;width:100px;text-align:right;">1,00</div>
<div class="t " style="top:682.69px;font-size:11px;color:#3aa7e8;left:2103.50px;width:20px;text-align:center;">$</div>
<div class="t " style="top:682.69px;font-size:11px;color:#f28a1e;left:2117.50px;width:20px;text-align:center;">$</div>
<div class="t " style="top:682.69px;font-size:11px;color:#f28a1e;left:2352.00px;width:100px;text-align:right;">7,50</div>
<div class="t " style="top:682.69px;font-size:11px;color:#3aa7e8;left:2306.50px;width:20px;text-align:center;">$</div>
<div class="r" style="left:64px;top:708px;width:13px;height:1px;background:#000;"></div>
<svg class="r" style="left:73px;top:704px;" width="9" height="9" viewBox="0 0 9 9"><rect x="0.5" y="0.5" width="8" height="8" fill="url(#pbg)" stroke="#9a9a9a"/><rect x="2" y="4" width="5" height="1" fill="#2b3d9a"/><rect x="4" y="2" width="1" height="5" fill="#2b3d9a"/></svg>
<div class="r" style="left:173px;top:699px;width:25px;height:19px;background:#f0c500;"></div>
<div class="t " style="top:703.27px;font-size:11.5px;color:#111;left:170.50px;width:30px;text-align:center;">O</div>
<div class="t " style="top:701.84px;font-size:12px;color:#111;font-weight:bold;left:268px;">Metal Frame Partition</div>
<div class="t " style="top:702.69px;font-size:11px;color:#111;left:571px;">Type?|Ht?</div>
<svg class="r" style="left:943.5px;top:702px;overflow:visible;" width="13" height="14" viewBox="0 0 13 14"><path d="M2.3,0 L10.3,0 L10.3,8 L12.8,8 L6.3,13.6 L-0.2,8 L2.3,8Z" fill="#0a1a26"/><path d="M5.5,1.5 h1.6 v2 h2 v1.6 h-2 v2 h-1.6 v-2 h-2 v-1.6 h2Z" fill="#fff"/></svg>
<div class="t u" style="top:702.69px;font-size:11px;color:#111;left:830.50px;width:200px;text-align:right;">0,00</div>
<div class="t u" style="top:702.69px;font-size:11px;color:#111;left:1036px;">ft</div>
<div class="t u" style="top:702.69px;font-size:11px;color:#111;left:962.00px;width:200px;text-align:right;">0,00</div>
<div class="t u" style="top:702.69px;font-size:11px;color:#111;left:1168px;">ft2</div>
<div class="t u" style="top:702.69px;font-size:11px;color:#111;left:1078.00px;width:200px;text-align:right;">0,00</div>
<div class="t u" style="top:702.69px;font-size:11px;color:#111;left:1284px;">ft2</div>
<div class="t u" style="top:702.69px;font-size:11px;color:#111;left:1185.60px;width:200px;text-align:right;">0,00</div>
<div class="t u" style="top:702.69px;font-size:11px;color:#111;left:1391px;">ft2</div>
<div class="t u" style="top:702.69px;font-size:11px;color:#111;left:1306.00px;width:200px;text-align:right;">0,00</div>
<div class="t u" style="top:702.69px;font-size:11px;color:#111;left:1511px;">ft2</div>
<div class="t " style="top:702.69px;font-size:11px;color:#111;left:2205.00px;width:100px;text-align:right;">1,00</div>
<div class="r" style="left:64px;top:726px;width:13px;height:1px;background:#000;"></div>
<div class="r" style="left:64px;top:744px;width:13px;height:1px;background:#000;"></div>
<svg class="r" style="left:73px;top:740px;" width="9" height="9" viewBox="0 0 9 9"><rect x="0.5" y="0.5" width="8" height="8" fill="url(#pbg)" stroke="#9a9a9a"/><rect x="2" y="4" width="5" height="1" fill="#2b3d9a"/><rect x="4" y="2" width="1" height="5" fill="#2b3d9a"/></svg>
<div class="r" style="left:173px;top:735px;width:25px;height:19px;background:#f0c500;"></div>
<div class="t " style="top:739.27px;font-size:11.5px;color:#111;left:170.50px;width:30px;text-align:center;">O</div>
<div class="t " style="top:737.84px;font-size:12px;color:#111;font-weight:bold;left:268px;">Wooden nailing base</div>
<div class="t " style="top:738.69px;font-size:11px;color:#111;left:571px;">Type?|Ht?</div>
<svg class="r" style="left:943.5px;top:737.5px;overflow:visible;" width="13" height="14" viewBox="0 0 13 14"><path d="M2.3,0 L10.3,0 L10.3,8 L12.8,8 L6.3,13.6 L-0.2,8 L2.3,8Z" fill="#0a1a26"/><path d="M5.5,1.5 h1.6 v2 h2 v1.6 h-2 v2 h-1.6 v-2 h-2 v-1.6 h2Z" fill="#fff"/></svg>
<div class="t " style="top:722.96px;font-size:9.5px;color:#222;left:929.00px;width:200px;text-align:center;">Surf</div>
<div class="t u" style="top:738.69px;font-size:11px;color:#111;left:830.50px;width:200px;text-align:right;">0,00</div>
<div class="t u" style="top:738.69px;font-size:11px;color:#111;left:1036px;">ft2</div>
<div class="t " style="top:738.69px;font-size:11px;color:#111;left:2205.00px;width:100px;text-align:right;">1,00</div>
<div class="r" style="left:64px;top:762px;width:13px;height:1px;background:#000;"></div>
<div class="r" style="left:64px;top:780px;width:13px;height:1px;background:#000;"></div>
<svg class="r" style="left:73px;top:776px;" width="9" height="9" viewBox="0 0 9 9"><rect x="0.5" y="0.5" width="8" height="8" fill="url(#pbg)" stroke="#9a9a9a"/><rect x="2" y="4" width="5" height="1" fill="#2b3d9a"/><rect x="4" y="2" width="1" height="5" fill="#2b3d9a"/></svg>
<div class="r" style="left:173px;top:771px;width:25px;height:19px;background:#f0c500;"></div>
<div class="t " style="top:775.27px;font-size:11.5px;color:#111;left:170.50px;width:30px;text-align:center;">O</div>
<div class="t " style="top:773.84px;font-size:12px;color:#111;font-weight:bold;left:268px;">Lintels int. walls</div>
<div class="t " style="top:774.69px;font-size:11px;color:#111;left:571px;">Type|Comp?</div>
<svg class="r" style="left:943.5px;top:773.5px;overflow:visible;" width="13" height="14" viewBox="0 0 13 14"><path d="M2.3,0 L10.3,0 L10.3,8 L12.8,8 L6.3,13.6 L-0.2,8 L2.3,8Z" fill="#0a1a26"/><path d="M5.5,1.5 h1.6 v2 h2 v1.6 h-2 v2 h-1.6 v-2 h-2 v-1.6 h2Z" fill="#fff"/></svg>
<div class="t " style="top:758.96px;font-size:9.5px;color:#222;left:929.00px;width:200px;text-align:center;">NbIntLint</div>
<div class="t u" style="top:774.69px;font-size:11px;color:#111;left:830.50px;width:200px;text-align:right;">0,00</div>
<div class="t u" style="top:774.69px;font-size:11px;color:#111;left:1036px;">unit</div>
<div class="t " style="top:758.96px;font-size:9.5px;color:#222;left:1056.00px;width:200px;text-align:center;">LengthIntLint</div>
<div class="t u" style="top:774.69px;font-size:11px;color:#111;left:962.00px;width:200px;text-align:right;">0,00</div>
<div class="t u" style="top:774.69px;font-size:11px;color:#111;left:1168px;">ft</div>
<div class="t " style="top:774.69px;font-size:11px;color:#111;left:2205.00px;width:100px;text-align:right;">1,00</div>
<div class="r" style="left:51px;top:800px;width:13px;height:1px;background:#000;"></div>
<svg class="r" style="left:60px;top:796px;" width="9" height="9" viewBox="0 0 9 9"><rect x="0.5" y="0.5" width="8" height="8" fill="url(#pbg)" stroke="#9a9a9a"/><rect x="2" y="4" width="5" height="1" fill="#2b3d9a"/><rect x="4" y="2" width="1" height="5" fill="#2b3d9a"/></svg>
<div class="t " style="top:793.84px;font-size:12px;color:#fff;font-weight:bold;left:268px;">06 Miscellaneous carpentry: Podiums</div>
<svg class="r" style="left:943.5px;top:794px;overflow:visible;" width="13" height="14" viewBox="0 0 13 14"><path d="M2.3,0 L10.3,0 L10.3,8 L12.8,8 L6.3,13.6 L-0.2,8 L2.3,8Z" fill="#0a1a26"/><path d="M5.5,1.5 h1.6 v2 h2 v1.6 h-2 v2 h-1.6 v-2 h-2 v-1.6 h2Z" fill="#fff"/></svg>
<div class="t " style="top:794.69px;font-size:11px;color:#fff;left:2205.00px;width:100px;text-align:right;">1,00</div>
<div class="r" style="left:51px;top:818px;width:13px;height:1px;background:#000;"></div>
<div class="r" style="left:51px;top:836px;width:13px;height:1px;background:#000;"></div>
<svg class="r" style="left:60px;top:832px;" width="9" height="9" viewBox="0 0 9 9"><rect x="0.5" y="0.5" width="8" height="8" fill="url(#pbg)" stroke="#9a9a9a"/><rect x="2" y="4" width="5" height="1" fill="#2b3d9a"/><rect x="4" y="2" width="1" height="5" fill="#2b3d9a"/></svg>
<div class="t " style="top:829.84px;font-size:12px;color:#fff;font-weight:bold;left:268px;">06 Millwork</div>
<svg class="r" style="left:943.5px;top:829.5px;overflow:visible;" width="13" height="14" viewBox="0 0 13 14"><path d="M2.3,0 L10.3,0 L10.3,8 L12.8,8 L6.3,13.6 L-0.2,8 L2.3,8Z" fill="#0a1a26"/><path d="M5.5,1.5 h1.6 v2 h2 v1.6 h-2 v2 h-1.6 v-2 h-2 v-1.6 h2Z" fill="#fff"/></svg>
<div class="t " style="top:814.96px;font-size:9.5px;color:#fff;left:929.00px;width:200px;text-align:center;">ExtDoorMoldgLength</div>
<div class="t u" style="top:830.69px;font-size:11px;color:#fff;left:830.50px;width:200px;text-align:right;">0,00</div>
<div class="t u" style="top:830.69px;font-size:11px;color:#fff;left:1036px;">ft</div>
<div class="t " style="top:814.96px;font-size:9.5px;color:#fff;left:1056.00px;width:200px;text-align:center;">IntDoorMoldgLength</div>
<div class="t u" style="top:830.69px;font-size:11px;color:#fff;left:962.00px;width:200px;text-align:right;">0,00</div>
<div class="t u" style="top:830.69px;font-size:11px;color:#fff;left:1168px;">ft</div>
<div class="t " style="top:814.96px;font-size:9.5px;color:#fff;left:1174.50px;width:200px;text-align:center;">WindPerim</div>
<div class="t u" style="top:830.69px;font-size:11px;color:#fff;left:1078.00px;width:200px;text-align:right;">0,00</div>
<div class="t u" style="top:830.69px;font-size:11px;color:#fff;left:1284px;">ft</div>
<div class="t " style="top:814.96px;font-size:9.5px;color:#fff;left:1289.00px;width:200px;text-align:center;">FloorPerim</div>
<div class="t u" style="top:830.69px;font-size:11px;color:#fff;left:1185.60px;width:200px;text-align:right;">0,00</div>
<div class="t u" style="top:830.69px;font-size:11px;color:#fff;left:1391px;">ft</div>
<div class="t " style="top:830.69px;font-size:11px;color:#fff;left:2205.00px;width:100px;text-align:right;">1,00</div>
<div class="r" style="left:51px;top:856px;width:13px;height:1px;background:#000;"></div>
<svg class="r" style="left:60px;top:852px;" width="9" height="9" viewBox="0 0 9 9"><rect x="0.5" y="0.5" width="8" height="8" fill="url(#pbg)" stroke="#9a9a9a"/><rect x="2" y="4" width="5" height="1" fill="#2b3d9a"/><rect x="4" y="2" width="1" height="5" fill="#2b3d9a"/></svg>
<div class="t " style="top:849.84px;font-size:12px;color:#fff;font-weight:bold;left:268px;">06 Woodworking</div>
<svg class="r" style="left:943.5px;top:850px;overflow:visible;" width="13" height="14" viewBox="0 0 13 14"><path d="M2.3,0 L10.3,0 L10.3,8 L12.8,8 L6.3,13.6 L-0.2,8 L2.3,8Z" fill="#0a1a26"/><path d="M5.5,1.5 h1.6 v2 h2 v1.6 h-2 v2 h-1.6 v-2 h-2 v-1.6 h2Z" fill="#fff"/></svg>
<div class="t " style="top:850.69px;font-size:11px;color:#fff;left:2205.00px;width:100px;text-align:right;">1,00</div>
<div class="r" style="left:964px;top:339px;width:1px;height:521px;background:#6a6a6a;"></div>
</div></div>
<div class="r" style="left:31px;top:860px;width:2434px;height:17px;background:#f0f0f0;"></div>
<div class="r" style="left:48px;top:861px;width:2172px;height:15px;background:#cdcdcd;"></div>
<svg class="r" style="left:35px;top:864px;" width="8" height="9" viewBox="0 0 8 9"><path d="M6,0.5 L1.5,4.5 L6,8.5" stroke="#555" stroke-width="1.6" fill="none"/></svg>
<div class="r" style="left:31px;top:876px;width:2434px;height:1px;background:#777;"></div>
<div class="r" style="left:31px;top:318px;width:1px;height:559px;background:#777;"></div>
<div class="r" style="left:34px;top:884px;width:2431px;height:17px;background:#fff;box-sizing:border-box;border:1px solid #444;border-right:none;"></div>
<div class="t " style="top:887.11px;font-size:10.5px;color:#222;left:37px;">Settings</div>
<div class="r" style="left:42px;top:909px;width:2423px;height:41px;background:none;box-sizing:border-box;border:1px solid #a8a8a8;border-right:none;"></div>
<div class="r" style="left:50px;top:903px;width:94px;height:12px;background:#fff;"></div>
<div class="t " style="top:905.11px;font-size:10.5px;color:#333;left:52px;letter-spacing:0.35px;">Calculation model</div>
<div class="r" style="left:51px;top:923px;width:347px;height:20px;background:#fff;box-sizing:border-box;border:1px solid #a8a8a8;"></div>
<div class="r" style="left:380px;top:924px;width:16px;height:18px;background:#f0f0f0;border-left:1px solid #ddd;"></div>
<svg class="r" style="left:385px;top:931px;" width="7" height="4" viewBox="0 0 7 4"><path d="M0,0 L7,0 L3.5,4Z" fill="#888"/></svg>
<div class="t " style="top:928.11px;font-size:10.5px;color:#222;left:55px;">Find for model</div>
<svg class="r" style="left:407px;top:926px;" width="20" height="20" viewBox="0 0 20 20"><ellipse cx="10" cy="3.5" rx="9" ry="3" stroke="#12202c" stroke-width="2" fill="none"/><path d="M1,4 L8,12 L8,20 L12,20 L12,12 L19,4 C17,6 3,6 1,4Z" fill="#12202c"/><path d="M8.5,6 L11.5,9 M11.5,6 L8.5,9" stroke="#fff" stroke-width="1.2"/></svg>
<div class="r" style="left:404px;top:944px;width:24px;height:1px;background:#222;"></div>
<div class="r" style="left:428px;top:922px;width:1px;height:23px;background:#222;"></div>
<svg class="r" style="left:435px;top:924px;" width="26" height="21" viewBox="0 0 26 21"><path d="M2,10.5 L22,10.5 M13,2 L22,10.5 L13,19" stroke="#12202c" stroke-width="3" fill="none" stroke-linecap="round"/></svg>
<div class="t " style="top:929.11px;font-size:10.5px;color:#333;left:479px;letter-spacing:0.3px;">Item :</div>
<div class="r" style="left:514px;top:925px;width:324px;height:19px;background:#f0f0f0;box-sizing:border-box;border:1px solid #ccc;"></div>
<div class="t " style="top:929.11px;font-size:10.5px;color:#111;left:517px;">06 Int. Partitions</div>
<div class="t " style="top:930.11px;font-size:10.5px;color:#333;left:847px;letter-spacing:0.2px;">Associated model</div>
<div class="r" style="left:935px;top:925px;width:302px;height:19px;background:#f0f0f0;box-sizing:border-box;border:1px solid #ccc;"></div>
<div class="r" style="left:1240px;top:923px;width:24px;height:22px;background:#fff;box-sizing:border-box;border-right:1px solid #222;border-bottom:1px solid #222;"></div>
<div class="t " style="top:929.11px;font-size:10.5px;color:#444;left:1242.00px;width:20px;text-align:center;">X</div>
<div class="r" style="left:43px;top:965px;width:537px;height:320px;background:none;box-sizing:border-box;border:1px solid #a8a8a8;"></div>
<div class="r" style="left:49px;top:959px;width:60px;height:12px;background:#fff;"></div>
<div class="t " style="top:960.11px;font-size:10.5px;color:#333;left:51px;">Settings list</div>
<div class="t " style="top:981.11px;font-size:10.5px;color:#222;left:66px;">System</div>
<div class="r" style="left:112px;top:975px;width:40px;height:21px;background:#000;"></div>
<div class="t " style="top:981.11px;font-size:10.5px;color:#fff;left:118px;">Prive</div>
<div class="r" style="left:53px;top:997px;width:522px;height:33px;background:#fff;box-sizing:border-box;border-top:2px solid #8a8a8a;border-left:1px solid #9a9a9a;border-right:1px solid #e0e0e0;border-bottom:1px solid #e0e0e0;"></div>
<svg class="r" style="left:63px;top:1006px;" width="17" height="17" viewBox="0 0 26 26"><path d="M10.75,0 h4.5 v10.75 h10.75 v4.5 h-10.75 v10.75 h-4.5 v-10.75 h-10.75 v-4.5 h10.75Z" fill="#12202c"/></svg>
<svg class="r" style="left:93px;top:1003px;" width="19" height="21" viewBox="0 0 19 21"><rect x="0" y="3" width="19" height="2.5" fill="#12202c"/><rect x="6" y="0" width="7" height="3" fill="none" stroke="#12202c" stroke-width="1.5"/><path d="M2,6 L3,20 L16,20 L17,6Z" fill="#12202c"/><path d="M6,8 v10 M9.5,8 v10 M13,8 v10" stroke="#fff" stroke-width="1.3"/></svg>
<svg class="r" style="left:129px;top:1004px;" width="20" height="20" viewBox="0 0 20 20"><ellipse cx="10" cy="3.5" rx="9" ry="3" stroke="#12202c" stroke-width="2" fill="none"/><path d="M1,4 L8,12 L8,20 L12,20 L12,12 L19,4 C17,6 3,6 1,4Z" fill="#12202c"/><path d="M8.5,6 L11.5,9 M11.5,6 L8.5,9" stroke="#fff" stroke-width="1.2"/></svg>
<svg class="r" style="left:161px;top:1010px;" width="20" height="8" viewBox="0 0 20 8"><rect x="6" y="0" width="14" height="3" fill="#12202c"/><rect x="0" y="5" width="14" height="3" fill="#12202c"/></svg>
<svg class="r" style="left:195px;top:1007px;" width="17" height="16" viewBox="0 0 17 16"><path d="M1,0 L1,15 L16,15" stroke="#12202c" stroke-width="1.6" fill="none"/><path d="M4,13 v-5 M7,13 v-7 M10,13 v-4 M13,13 v-9" stroke="#12202c" stroke-width="1.6"/></svg>
<svg class="r" style="left:225px;top:1006px;" width="20" height="18" viewBox="0 0 31 27"><rect x="8" y="0" width="16" height="4" fill="#12202c"/><rect x="0" y="6" width="31" height="14" rx="2" fill="#12202c"/><rect x="6" y="14" width="19" height="13" fill="#12202c"/><rect x="9" y="17" width="13" height="8" fill="#fff"/></svg>
<svg class="r" style="left:258px;top:1005px;" width="19" height="19" viewBox="0 0 26 26"><path d="M22,9 A10,10 0 0 0 3.5,10" stroke="#12202c" stroke-width="2.6" fill="none"/><path d="M25,2 L25,12 L15,12Z" fill="#12202c"/><path d="M4,17 A10,10 0 0 0 22.5,16" stroke="#12202c" stroke-width="2.6" fill="none"/><path d="M1,24 L1,14 L11,14Z" fill="#12202c"/></svg>
<svg class="r" style="left:288px;top:1004px;" width="21" height="21" viewBox="0 0 24 24"><path d="M1,23 L3,16 L17,2 C18.5,0.5 20.5,0.5 22,2 C23.5,3.5 23.5,5.5 22,7 L8,21Z" fill="#12202c"/><path d="M4.5,16.5 L7.5,19.5" stroke="#fff" stroke-width="1"/><path d="M15,4 L20,9" stroke="#fff" stroke-width="1"/></svg>
<svg class="r" style="left:322px;top:1004px;" width="19" height="21" viewBox="0 0 19 21"><path d="M3,9 C3,3 12,1 15,6" stroke="#9a9a9a" stroke-width="1.8" fill="none"/><path d="M13,2 L17,6 L12,8Z" fill="#9a9a9a"/><text x="1" y="17" font-size="9" font-family="Liberation Serif" fill="#9a9a9a">a</text><text x="10" y="20" font-size="10" font-family="Liberation Serif" fill="#9a9a9a">b</text></svg>
<svg class="r" style="left:357px;top:1003px;" width="17" height="22" viewBox="0 0 25 32"><path d="M6,0 L19,0 L19,15 L25,15 L12.5,27 L0,15 L6,15Z" fill="#12202c"/><path d="M11.5,4 h2 v3 h3 v2 h-3 v3 h-2 v-3 h-3 v-2 h3Z" fill="#fff"/><rect x="1" y="29.5" width="23" height="2.5" fill="#12202c"/></svg>
<div class="r" style="left:53px;top:1033px;width:505px;height:20px;background:#232a35;"></div>
<div class="r" style="left:73px;top:1034px;width:1px;height:19px;background:#d8d8d8;"></div>
<div class="r" style="left:164px;top:1034px;width:1px;height:19px;background:#d8d8d8;"></div>
<div class="r" style="left:424px;top:1034px;width:1px;height:19px;background:#d8d8d8;"></div>
<div class="r" style="left:474px;top:1034px;width:1px;height:19px;background:#d8d8d8;"></div>
<div class="t " style="top:1036.84px;font-size:12px;color:#fff;font-weight:bold;left:68.00px;width:100px;text-align:center;">Code</div>
<div class="t " style="top:1036.84px;font-size:12px;color:#fff;font-weight:bold;left:194.00px;width:200px;text-align:center;">Default Name</div>
<div class="r" style="left:425px;top:1033px;width:49px;height:20px;overflow:hidden;"><div class="t" style="left:-8.5px;top:4.8px;font-size:12px;font-weight:bold;color:#fff;">Default unit</div></div>
<div class="t u" style="top:1036.84px;font-size:12px;color:#fff;font-weight:bold;left:475.00px;width:100px;text-align:center;">Favourites</div>
<div class="r" style="left:53px;top:1053px;width:505px;height:226px;overflow:hidden;"><div class="r" style="left:-53px;top:-1053px;width:600px;height:1300px;">
<div class="r" style="left:53px;top:1053px;width:20px;height:240px;background:#f0f0f0;"></div>
<div class="r" style="left:73px;top:1053px;width:485px;height:20px;background:#dff3f3;"></div>
<svg class="r" style="left:518px;top:1056px;" width="13" height="13" viewBox="0 0 13 13"><rect x="0.5" y="0.5" width="12" height="12" fill="#fff" stroke="#777"/><rect x="2.5" y="2.5" width="8" height="8" fill="#1f7fc0" stroke="#0d4f80" stroke-width="0.8"/></svg>
<div class="r" style="left:73px;top:1073px;width:485px;height:19px;background:#0078d7;"></div>
<div class="r" style="left:53px;top:1092px;width:505px;height:1px;background:#e6e6e6;"></div>
<div class="r" style="left:53px;top:1073px;width:20px;height:1px;background:#c8c8c8;"></div>
<div class="r" style="left:73px;top:1073px;width:91px;height:19px;overflow:hidden;"><div class="t" style="left:0.5px;top:3.69px;font-size:11px;color:#fff;">BeamLen</div></div>
<div class="t " style="top:1076.69px;font-size:11px;color:#fff;left:168px;">Beam Length</div>
<div class="t " style="top:1076.69px;font-size:11px;color:#fff;left:428px;">ft</div>
<svg class="r" style="left:518px;top:1076.5px;" width="13" height="13" viewBox="0 0 13 13"><rect x="0.5" y="0.5" width="12" height="12" fill="#e8eaf0" stroke="#8a8f9a"/><path d="M3,6.5 L5.5,10 L10,2.5" stroke="#2b4aa0" stroke-width="1.6" fill="none"/></svg>
<div class="r" style="left:53px;top:1112px;width:505px;height:1px;background:#e6e6e6;"></div>
<div class="r" style="left:53px;top:1093px;width:20px;height:1px;background:#c8c8c8;"></div>
<div class="r" style="left:73px;top:1093px;width:91px;height:19px;overflow:hidden;"><div class="t" style="left:0.5px;top:3.69px;font-size:11px;color:#111;">BeamWid</div></div>
<div class="t " style="top:1096.69px;font-size:11px;color:#111;left:168px;">Beam Width</div>
<div class="t " style="top:1096.69px;font-size:11px;color:#111;left:428px;">in</div>
<svg class="r" style="left:518px;top:1096.5px;" width="13" height="13" viewBox="0 0 13 13"><rect x="0.5" y="0.5" width="12" height="12" fill="#f4f5f8" stroke="#8a8f9a"/></svg>
<div class="r" style="left:53px;top:1132px;width:505px;height:1px;background:#e6e6e6;"></div>
<div class="r" style="left:53px;top:1113px;width:20px;height:1px;background:#c8c8c8;"></div>
<div class="r" style="left:73px;top:1113px;width:91px;height:19px;overflow:hidden;"><div class="t" style="left:0.5px;top:3.69px;font-size:11px;color:#111;">BeamDep</div></div>
<div class="t " style="top:1116.69px;font-size:11px;color:#111;left:168px;">Beam Depth</div>
<div class="t " style="top:1116.69px;font-size:11px;color:#111;left:428px;">in</div>
<svg class="r" style="left:518px;top:1116.5px;" width="13" height="13" viewBox="0 0 13 13"><rect x="0.5" y="0.5" width="12" height="12" fill="#f4f5f8" stroke="#8a8f9a"/><path d="M3,6.5 L5.5,10 L10,2.5" stroke="#2b4aa0" stroke-width="1.6" fill="none"/></svg>
<div class="r" style="left:53px;top:1152px;width:505px;height:1px;background:#e6e6e6;"></div>
<div class="r" style="left:53px;top:1133px;width:20px;height:1px;background:#c8c8c8;"></div>
<div class="r" style="left:73px;top:1133px;width:91px;height:19px;overflow:hidden;"><div class="t" style="left:0.5px;top:3.69px;font-size:11px;color:#111;">WallExtFinHght</div></div>
<div class="t " style="top:1136.69px;font-size:11px;color:#111;left:168px;">Wall Exterior Finish Height</div>
<div class="t " style="top:1136.69px;font-size:11px;color:#111;left:428px;">ft</div>
<svg class="r" style="left:518px;top:1136.5px;" width="13" height="13" viewBox="0 0 13 13"><rect x="0.5" y="0.5" width="12" height="12" fill="#f4f5f8" stroke="#8a8f9a"/><path d="M3,6.5 L5.5,10 L10,2.5" stroke="#2b4aa0" stroke-width="1.6" fill="none"/></svg>
<div class="r" style="left:53px;top:1172px;width:505px;height:1px;background:#e6e6e6;"></div>
<div class="r" style="left:53px;top:1153px;width:20px;height:1px;background:#c8c8c8;"></div>
<div class="r" style="left:73px;top:1153px;width:91px;height:19px;overflow:hidden;"><div class="t" style="left:0.5px;top:3.69px;font-size:11px;color:#111;">WallIntFinHght</div></div>
<div class="t " style="top:1156.69px;font-size:11px;color:#111;left:168px;">Wall Interior Finish Height</div>
<div class="t " style="top:1156.69px;font-size:11px;color:#111;left:428px;">ft</div>
<svg class="r" style="left:518px;top:1156.5px;" width="13" height="13" viewBox="0 0 13 13"><rect x="0.5" y="0.5" width="12" height="12" fill="#f4f5f8" stroke="#8a8f9a"/><path d="M3,6.5 L5.5,10 L10,2.5" stroke="#2b4aa0" stroke-width="1.6" fill="none"/></svg>
<div class="r" style="left:53px;top:1192px;width:505px;height:1px;background:#e6e6e6;"></div>
<div class="r" style="left:53px;top:1173px;width:20px;height:1px;background:#c8c8c8;"></div>
<div class="r" style="left:73px;top:1173px;width:91px;height:19px;overflow:hidden;"><div class="t" style="left:0.5px;top:3.69px;font-size:11px;color:#111;">WallFrmLen</div></div>
<div class="t " style="top:1176.69px;font-size:11px;color:#111;left:168px;">Wall Framing Length</div>
<div class="t " style="top:1176.69px;font-size:11px;color:#111;left:428px;">ft</div>
<svg class="r" style="left:518px;top:1176.5px;" width="13" height="13" viewBox="0 0 13 13"><rect x="0.5" y="0.5" width="12" height="12" fill="#f4f5f8" stroke="#8a8f9a"/><path d="M3,6.5 L5.5,10 L10,2.5" stroke="#2b4aa0" stroke-width="1.6" fill="none"/></svg>
<div class="r" style="left:53px;top:1212px;width:505px;height:1px;background:#e6e6e6;"></div>
<div class="r" style="left:53px;top:1193px;width:20px;height:1px;background:#c8c8c8;"></div>
<div class="r" style="left:73px;top:1193px;width:91px;height:19px;overflow:hidden;"><div class="t" style="left:0.5px;top:3.69px;font-size:11px;color:#111;">WallExtInsNetSurf</div></div>
<div class="t " style="top:1196.69px;font-size:11px;color:#111;left:168px;">Wall Exterior Insulation Net Surface</div>
<div class="t " style="top:1196.69px;font-size:11px;color:#111;left:428px;">ft2</div>
<svg class="r" style="left:518px;top:1196.5px;" width="13" height="13" viewBox="0 0 13 13"><rect x="0.5" y="0.5" width="12" height="12" fill="#f4f5f8" stroke="#8a8f9a"/><path d="M3,6.5 L5.5,10 L10,2.5" stroke="#2b4aa0" stroke-width="1.6" fill="none"/></svg>
<div class="r" style="left:53px;top:1232px;width:505px;height:1px;background:#e6e6e6;"></div>
<div class="r" style="left:53px;top:1213px;width:20px;height:1px;background:#c8c8c8;"></div>
<div class="r" style="left:73px;top:1213px;width:91px;height:19px;overflow:hidden;"><div class="t" style="left:0.5px;top:3.69px;font-size:11px;color:#111;">WallExtFinNetSurf</div></div>
<div class="t " style="top:1216.69px;font-size:11px;color:#111;left:168px;">Wall Exterior Finish Net Surface</div>
<div class="t " style="top:1216.69px;font-size:11px;color:#111;left:428px;">ft2</div>
<svg class="r" style="left:518px;top:1216.5px;" width="13" height="13" viewBox="0 0 13 13"><rect x="0.5" y="0.5" width="12" height="12" fill="#f4f5f8" stroke="#8a8f9a"/><path d="M3,6.5 L5.5,10 L10,2.5" stroke="#2b4aa0" stroke-width="1.6" fill="none"/></svg>
<div class="r" style="left:53px;top:1252px;width:505px;height:1px;background:#e6e6e6;"></div>
<div class="r" style="left:53px;top:1233px;width:20px;height:1px;background:#c8c8c8;"></div>
<div class="r" style="left:73px;top:1233px;width:91px;height:19px;overflow:hidden;"><div class="t" style="left:0.5px;top:3.69px;font-size:11px;color:#111;">%Prop</div></div>
<div class="t " style="top:1236.69px;font-size:11px;color:#111;left:168px;">Percentage of Proportions</div>
<div class="t " style="top:1236.69px;font-size:11px;color:#111;left:428px;">ft2</div>
<svg class="r" style="left:518px;top:1236.5px;" width="13" height="13" viewBox="0 0 13 13"><rect x="0.5" y="0.5" width="12" height="12" fill="#f4f5f8" stroke="#8a8f9a"/><path d="M3,6.5 L5.5,10 L10,2.5" stroke="#2b4aa0" stroke-width="1.6" fill="none"/></svg>
<div class="r" style="left:53px;top:1272px;width:505px;height:1px;background:#e6e6e6;"></div>
<div class="r" style="left:53px;top:1253px;width:20px;height:1px;background:#c8c8c8;"></div>
<div class="r" style="left:73px;top:1253px;width:91px;height:19px;overflow:hidden;"><div class="t" style="left:0.5px;top:3.69px;font-size:11px;color:#111;">WallIntFinNetSurf</div></div>
<div class="t " style="top:1256.69px;font-size:11px;color:#111;left:168px;">Wall Interior Finish Net Surface</div>
<div class="t " style="top:1256.69px;font-size:11px;color:#111;left:428px;">ft2</div>
<svg class="r" style="left:518px;top:1256.5px;" width="13" height="13" viewBox="0 0 13 13"><rect x="0.5" y="0.5" width="12" height="12" fill="#f4f5f8" stroke="#8a8f9a"/><path d="M3,6.5 L5.5,10 L10,2.5" stroke="#2b4aa0" stroke-width="1.6" fill="none"/></svg>
<div class="r" style="left:53px;top:1292px;width:505px;height:1px;background:#e6e6e6;"></div>
<div class="r" style="left:53px;top:1273px;width:20px;height:1px;background:#c8c8c8;"></div>
<div class="r" style="left:73px;top:1273px;width:91px;height:19px;overflow:hidden;"><div class="t" style="left:0.5px;top:3.69px;font-size:11px;color:#111;">WallFramingLengthAssembly</div></div>
<div class="t " style="top:1276.69px;font-size:11px;color:#111;left:168px;">Wall Framing Length Assembly</div>
<div class="t " style="top:1276.69px;font-size:11px;color:#111;left:428px;">ft</div>
<svg class="r" style="left:518px;top:1276.5px;" width="13" height="13" viewBox="0 0 13 13"><rect x="0.5" y="0.5" width="12" height="12" fill="#f4f5f8" stroke="#8a8f9a"/><path d="M3,6.5 L5.5,10 L10,2.5" stroke="#2b4aa0" stroke-width="1.6" fill="none"/></svg>
<div class="r" style="left:164px;top:1073px;width:1px;height:206px;background:#e6e6e6;"></div>
<div class="r" style="left:424px;top:1073px;width:1px;height:206px;background:#e6e6e6;"></div>
<div class="r" style="left:474px;top:1073px;width:1px;height:206px;background:#e6e6e6;"></div>
<div class="r" style="left:73px;top:1053px;width:1px;height:226px;background:#c8c8c8;"></div>
</div></div>
<div class="r" style="left:558px;top:1033px;width:17px;height:246px;background:#f0f0f0;"></div>
<div class="r" style="left:559px;top:1053px;width:15px;height:15px;background:#cdcdcd;"></div>
<svg class="r" style="left:562px;top:1038px;" width="10" height="7" viewBox="0 0 10 7"><path d="M1,6 L5,1.5 L9,6" stroke="#444" stroke-width="1.4" fill="none"/></svg>
<svg class="r" style="left:562px;top:1272px;" width="10" height="7" viewBox="0 0 10 7"><path d="M1,1 L5,5.5 L9,1" stroke="#444" stroke-width="1.4" fill="none"/></svg>
<svg class="r" style="left:590px;top:1033px;" width="28" height="22" viewBox="0 0 28 22"><path d="M2,11 L25,11 M16,2 L25,11 L16,20" stroke="#12202c" stroke-width="3" fill="none" stroke-linecap="round"/></svg>
<svg class="r" style="left:590px;top:1073px;" width="28" height="22" viewBox="0 0 28 22"><path d="M26,11 L3,11 M12,2 L3,11 L12,20" stroke="#12202c" stroke-width="3" fill="none" stroke-linecap="round"/></svg>
<div class="r" style="left:628px;top:954px;width:3px;height:325px;background:#000;"></div>
<div class="r" style="left:640px;top:964px;width:1369px;height:320px;background:none;box-sizing:border-box;border:1px solid #a8a8a8;"></div>
<div class="r" style="left:646px;top:958px;width:68px;height:12px;background:#fff;"></div>
<div class="t " style="top:960.11px;font-size:10.5px;color:#333;left:648px;">Item settings</div>
<div class="r" style="left:651px;top:980px;width:1349px;height:33px;background:#fff;box-sizing:border-box;border-top:2px solid #8a8a8a;border-left:1px solid #9a9a9a;border-right:1px solid #e0e0e0;border-bottom:1px solid #e0e0e0;"></div>
<svg class="r" style="left:661px;top:988px;" width="20" height="20" viewBox="0 0 26 26"><path d="M10.25,0 h5.5 v10.25 h10.25 v5.5 h-10.25 v10.25 h-5.5 v-10.25 h-10.25 v-5.5 h10.25Z" fill="#12202c"/></svg>
<svg class="r" style="left:698px;top:986px;" width="19" height="21" viewBox="0 0 19 21"><rect x="0" y="3" width="19" height="2.5" fill="#12202c"/><rect x="6" y="0" width="7" height="3" fill="none" stroke="#12202c" stroke-width="1.5"/><path d="M2,6 L3,20 L16,20 L17,6Z" fill="#12202c"/><path d="M6,8 v10 M9.5,8 v10 M13,8 v10" stroke="#fff" stroke-width="1.3"/></svg>
<svg class="r" style="left:736px;top:987px;" width="16" height="21" viewBox="0 0 21 28"><rect x="0" y="0" width="21" height="2.2" fill="#12202c"/><path d="M10.5,4 L10.5,28 M1,13 L10.5,4 L20,13" stroke="#12202c" stroke-width="2.4" fill="none"/></svg>
<svg class="r" style="left:768px;top:989px;" width="16" height="19" viewBox="0 0 20 26"><path d="M10,2 L10,26 M1,11 L10,2 L19,11" stroke="#12202c" stroke-width="2.4" fill="none"/></svg>
<svg class="r" style="left:800px;top:989px;" width="16" height="19" viewBox="0 0 20 26"><path d="M10,0 L10,24 M1,15 L10,24 L19,15" stroke="#12202c" stroke-width="2.4" fill="none"/></svg>
<svg class="r" style="left:832px;top:988px;" width="16" height="21" viewBox="0 0 21 28"><path d="M10.5,0 L10.5,23 M1,14 L10.5,23 L20,14" stroke="#12202c" stroke-width="2.4" fill="none"/><rect x="0" y="26" width="21" height="2.4" fill="#12202c"/></svg>
<svg class="r" style="left:866px;top:986px;" width="20" height="21" viewBox="0 0 20 20"><ellipse cx="10" cy="3.5" rx="9" ry="3" stroke="#12202c" stroke-width="2" fill="none"/><path d="M1,4 L8,12 L8,20 L12,20 L12,12 L19,4 C17,6 3,6 1,4Z" fill="#12202c"/><path d="M8.5,6 L11.5,9 M11.5,6 L8.5,9" stroke="#fff" stroke-width="1.2"/></svg>
<svg class="r" style="left:898px;top:993px;" width="20" height="8" viewBox="0 0 20 8"><rect x="6" y="0" width="14" height="3" fill="#12202c"/><rect x="0" y="5" width="14" height="3" fill="#12202c"/></svg>
<svg class="r" style="left:932px;top:990px;" width="17" height="16" viewBox="0 0 17 16"><path d="M1,0 L1,15 L16,15" stroke="#12202c" stroke-width="1.6" fill="none"/><path d="M4,13 v-5 M7,13 v-7 M10,13 v-4 M13,13 v-9" stroke="#12202c" stroke-width="1.6"/></svg>
<svg class="r" style="left:965px;top:989px;" width="18" height="18" viewBox="0 0 18 18"><text x="0" y="15" font-size="17" font-style="italic" font-family="Liberation Serif" fill="#a0a0a0">fx</text></svg>
<svg class="r" style="left:994px;top:989px;" width="21" height="15" viewBox="0 0 21 15"><rect x="0" y="3" width="20" height="4" rx="1" fill="#12202c"/><rect x="0" y="10" width="20" height="4" rx="1" fill="#12202c"/></svg>
<svg class="r" style="left:1027px;top:987px;" width="20" height="20" viewBox="0 0 20 20"><path d="M1,19 L1,1 L13,1 L19,7 L19,19" stroke="#12202c" stroke-width="1.6" fill="none"/><path d="M13,1 L13,7 L19,7" stroke="#12202c" stroke-width="1.3" fill="none"/><rect x="0" y="17" width="20" height="3" fill="#12202c"/><path d="M3,17 v-2 M6,17 v-2 M9,17 v-2 M12,17 v-2 M15,17 v-2" stroke="#12202c" stroke-width="1"/></svg>
<svg class="r" style="left:1060px;top:988px;" width="18" height="18" viewBox="0 0 18 18"><path d="M1,1 L14,1 L17,4 L17,17 L1,17Z" stroke="#12202c" stroke-width="1.8" fill="none"/><rect x="4" y="1" width="9" height="6" fill="#12202c"/><rect x="9.5" y="2" width="2" height="4" fill="#fff"/></svg>
<svg class="r" style="left:1090px;top:991px;" width="21" height="13" viewBox="0 0 32 20"><polygon fill="#f98214" points="6.93,2.72 9.38,0 22.4,14.0 25.8,10.3 22.4,6.11 19.7,8.83 17.0,5.84 22.4,0 31.8,10.05 22.4,19.97"/><polygon fill="#f98214" points="5.57,4.08 8.0,6.93 5.98,10.2 9.38,14.0 12.36,11.0 14.8,13.7 9.38,19.97 0,10.05"/></svg>
<svg class="r" style="left:1124px;top:987px;" width="18" height="21" viewBox="0 0 18 21"><path d="M4,3 L4,20 L17,20 L17,8 L12,3Z M12,3 L12,8 L17,8" stroke="#12202c" stroke-width="1.5" fill="#fff" stroke-linejoin="round"/><path d="M1,17 L1,2 C1,1 1.5,0 3,0 L10,0" stroke="#12202c" stroke-width="1.3" fill="none"/></svg>
<svg class="r" style="left:1156px;top:987px;" width="17" height="20" viewBox="0 0 17 20"><rect x="1" y="3" width="11" height="15" stroke="#9a9a9a" stroke-width="1.4" fill="none"/><rect x="4" y="1" width="5" height="4" stroke="#9a9a9a" stroke-width="1.3" fill="#fff"/><path d="M6,9 L6,19 L16,19 L16,11 L14,9Z" stroke="#9a9a9a" stroke-width="1.4" fill="#fff"/></svg>
<svg class="r" style="left:1187px;top:986px;" width="20" height="20" viewBox="0 0 20 20"><path d="M12,0 L19,7 L15,9 L10,4Z" fill="#9a9a9a"/><path d="M10,5 L14,9 L8,15 C6,17 3,19 0,20 C1,17 3,14 5,11Z" fill="#9a9a9a"/></svg>
<svg class="r" style="left:1219px;top:986px;" width="19" height="21" viewBox="0 0 19 21"><path d="M3,9 C3,3 12,1 15,6" stroke="#12202c" stroke-width="1.8" fill="none"/><path d="M13,2 L17,6 L12,8Z" fill="#12202c"/><text x="1" y="17" font-size="9" font-family="Liberation Serif" fill="#12202c">a</text><text x="10" y="20" font-size="10" font-family="Liberation Serif" fill="#12202c">b</text></svg>
<div class="r" style="left:651px;top:1016px;width:1350px;height:263px;background:#ababab;box-sizing:border-box;border-right:1px solid #6a6a6a;border-top:1px solid #6a6a6a;"></div>
<div class="r" style="left:651px;top:1016px;width:705px;height:20px;background:#232a35;"></div>
<div class="r" style="left:671px;top:1017px;width:1px;height:19px;background:#d8d8d8;"></div>
<div class="r" style="left:789px;top:1017px;width:1px;height:19px;background:#d8d8d8;"></div>
<div class="r" style="left:1008px;top:1017px;width:1px;height:19px;background:#d8d8d8;"></div>
<div class="r" style="left:1058px;top:1017px;width:1px;height:19px;background:#d8d8d8;"></div>
<div class="r" style="left:1146px;top:1017px;width:1px;height:19px;background:#d8d8d8;"></div>
<div class="r" style="left:1196px;top:1017px;width:1px;height:19px;background:#d8d8d8;"></div>
<div class="r" style="left:1246px;top:1017px;width:1px;height:19px;background:#d8d8d8;"></div>
<div class="t " style="top:1019.84px;font-size:12px;color:#fff;font-weight:bold;left:630.00px;width:200px;text-align:center;">Code</div>
<div class="t " style="top:1019.84px;font-size:12px;color:#fff;font-weight:bold;left:798.00px;width:200px;text-align:center;">Param. name / Options</div>
<div class="t " style="top:1019.84px;font-size:12px;color:#fff;font-weight:bold;left:933.00px;width:200px;text-align:center;">Option</div>
<div class="t u" style="top:1019.84px;font-size:12px;color:#fff;font-weight:bold;left:1002.00px;width:200px;text-align:center;">Value</div>
<div class="t " style="top:1019.84px;font-size:12px;color:#fff;font-weight:bold;left:1071.00px;width:200px;text-align:center;">Unit</div>
<div class="t " style="top:1019.84px;font-size:12px;color:#fff;font-weight:bold;left:1201.00px;width:200px;text-align:center;">TakeOff</div>
<div class="r" style="left:1197px;top:1016px;width:49px;height:20px;overflow:hidden;"><div class="t u" style="left:0px;top:4.8px;font-size:12px;font-weight:bold;color:#fff;">Constant</div></div>
<div class="r" style="left:651px;top:1036px;width:20px;height:159px;background:#f0f0f0;"></div>
<div class="r" style="left:671px;top:1036px;width:685px;height:19px;background:#dff3f3;"></div>
<svg class="r" style="left:1215px;top:1039px;" width="13" height="13" viewBox="0 0 13 13"><rect x="0.5" y="0.5" width="12" height="12" fill="#fff" stroke="#777"/><rect x="2.5" y="2.5" width="8" height="8" fill="#1f7fc0" stroke="#0d4f80" stroke-width="0.8"/></svg>
<div class="r" style="left:671px;top:1055px;width:685px;height:20px;background:#fff;"></div>
<div class="r" style="left:671px;top:1075px;width:685px;height:1px;background:#ececec;"></div>
<div class="r" style="left:651px;top:1055px;width:20px;height:1px;background:#c8c8c8;"></div>
<div class="t " style="top:1059.69px;font-size:11px;color:#111;left:675px;">Q</div>
<div class="t " style="top:1059.69px;font-size:11px;color:#111;left:793px;">Quantity</div>
<div class="r" style="left:1008px;top:1056px;width:50px;height:19px;overflow:hidden;"><div class="t" style="left:4px;top:3.69px;font-size:11px;color:#111;">Non</div></div>
<div class="t " style="top:1059.27px;font-size:11.5px;color:#111;font-weight:bold;left:1043.00px;width:100px;text-align:right;">1,00</div>
<div class="t " style="top:1059.69px;font-size:11px;color:#111;left:1150px;">unit</div>
<svg class="r" style="left:1215px;top:1059px;" width="13" height="13" viewBox="0 0 13 13"><rect x="0.5" y="0.5" width="12" height="12" fill="#f4f5f8" stroke="#8a8f9a"/></svg>
<div class="r" style="left:671px;top:1075px;width:685px;height:20px;background:#fff;"></div>
<div class="r" style="left:671px;top:1095px;width:685px;height:1px;background:#ececec;"></div>
<div class="r" style="left:651px;top:1075px;width:20px;height:1px;background:#c8c8c8;"></div>
<div class="t " style="top:1079.69px;font-size:11px;color:#111;left:675px;">FQ</div>
<div class="t " style="top:1079.69px;font-size:11px;color:#111;left:793px;">Final Quantity</div>
<div class="r" style="left:1008px;top:1076px;width:50px;height:19px;overflow:hidden;"><div class="t" style="left:4px;top:3.69px;font-size:11px;color:#111;">Non</div></div>
<div class="t u" style="top:1079.69px;font-size:11px;color:#111;left:1043.00px;width:100px;text-align:right;">1,00</div>
<div class="t " style="top:1079.69px;font-size:11px;color:#111;left:1150px;">unit</div>
<svg class="r" style="left:1215px;top:1079px;" width="13" height="13" viewBox="0 0 13 13"><rect x="0.5" y="0.5" width="12" height="12" fill="#f4f5f8" stroke="#8a8f9a"/></svg>
<div class="r" style="left:671px;top:1095px;width:685px;height:20px;background:#fff;"></div>
<div class="r" style="left:1058px;top:1095px;width:88px;height:20px;background:#fdf6e2;"></div>
<div class="r" style="left:671px;top:1115px;width:685px;height:1px;background:#ececec;"></div>
<div class="r" style="left:651px;top:1095px;width:20px;height:1px;background:#c8c8c8;"></div>
<div class="t " style="top:1099.69px;font-size:11px;color:#111;left:675px;">Len-s</div>
<div class="t " style="top:1099.69px;font-size:11px;color:#111;left:793px;">Length</div>
<div class="r" style="left:1008px;top:1096px;width:50px;height:19px;overflow:hidden;"><div class="t" style="left:4px;top:3.69px;font-size:11px;color:#111;">Validatio</div></div>
<div class="t u" style="top:1099.69px;font-size:11px;color:#111;left:1043.00px;width:100px;text-align:right;">110,00</div>
<div class="t " style="top:1099.69px;font-size:11px;color:#111;left:1150px;">ft</div>
<svg class="r" style="left:1215px;top:1099px;" width="13" height="13" viewBox="0 0 13 13"><rect x="0.5" y="0.5" width="12" height="12" fill="#f4f5f8" stroke="#8a8f9a"/><path d="M3,6.5 L5.5,10 L10,2.5" stroke="#2b4aa0" stroke-width="1.6" fill="none"/></svg>
<div class="r" style="left:671px;top:1115px;width:685px;height:20px;background:#fff;"></div>
<div class="r" style="left:1058px;top:1115px;width:88px;height:20px;background:#fdf6e2;"></div>
<div class="r" style="left:671px;top:1135px;width:685px;height:1px;background:#ececec;"></div>
<div class="r" style="left:651px;top:1115px;width:20px;height:1px;background:#c8c8c8;"></div>
<div class="t " style="top:1119.69px;font-size:11px;color:#111;left:675px;">Surf-s</div>
<div class="t " style="top:1119.69px;font-size:11px;color:#111;left:793px;">Surface</div>
<div class="r" style="left:1008px;top:1116px;width:50px;height:19px;overflow:hidden;"><div class="t" style="left:4px;top:3.69px;font-size:11px;color:#111;">Validatio</div></div>
<div class="t u" style="top:1119.69px;font-size:11px;color:#111;left:1043.00px;width:100px;text-align:right;">1 500,00</div>
<div class="t " style="top:1119.69px;font-size:11px;color:#111;left:1150px;">ft2</div>
<svg class="r" style="left:1215px;top:1119px;" width="13" height="13" viewBox="0 0 13 13"><rect x="0.5" y="0.5" width="12" height="12" fill="#f4f5f8" stroke="#8a8f9a"/><path d="M3,6.5 L5.5,10 L10,2.5" stroke="#2b4aa0" stroke-width="1.6" fill="none"/></svg>
<div class="r" style="left:671px;top:1135px;width:685px;height:20px;background:#fff;"></div>
<div class="r" style="left:1058px;top:1135px;width:88px;height:20px;background:#fdf6e2;"></div>
<div class="r" style="left:671px;top:1155px;width:685px;height:1px;background:#ececec;"></div>
<div class="r" style="left:651px;top:1135px;width:20px;height:1px;background:#c8c8c8;"></div>
<div class="t " style="top:1139.69px;font-size:11px;color:#111;left:675px;">SurfJointWalls-s</div>
<div class="t " style="top:1139.69px;font-size:11px;color:#111;left:793px;">Surface Joints Walls (sum)</div>
<div class="r" style="left:1008px;top:1136px;width:50px;height:19px;overflow:hidden;"><div class="t" style="left:4px;top:3.69px;font-size:11px;color:#111;">Validatio</div></div>
<div class="t u" style="top:1139.69px;font-size:11px;color:#111;left:1043.00px;width:100px;text-align:right;">3 000,00</div>
<div class="t " style="top:1139.69px;font-size:11px;color:#111;left:1150px;">ft2</div>
<svg class="r" style="left:1215px;top:1139px;" width="13" height="13" viewBox="0 0 13 13"><rect x="0.5" y="0.5" width="12" height="12" fill="#f4f5f8" stroke="#8a8f9a"/><path d="M3,6.5 L5.5,10 L10,2.5" stroke="#2b4aa0" stroke-width="1.6" fill="none"/></svg>
<div class="r" style="left:671px;top:1155px;width:685px;height:20px;background:#fff;"></div>
<div class="r" style="left:1058px;top:1155px;width:88px;height:20px;background:#fdf6e2;"></div>
<div class="r" style="left:671px;top:1175px;width:685px;height:1px;background:#ececec;"></div>
<div class="r" style="left:651px;top:1155px;width:20px;height:1px;background:#c8c8c8;"></div>
<div class="t " style="top:1159.69px;font-size:11px;color:#111;left:675px;">SurfPrim-s</div>
<div class="t " style="top:1159.69px;font-size:11px;color:#111;left:793px;">Surface Primer (sum)</div>
<div class="r" style="left:1008px;top:1156px;width:50px;height:19px;overflow:hidden;"><div class="t" style="left:4px;top:3.69px;font-size:11px;color:#111;">Validatio</div></div>
<div class="t u" style="top:1159.69px;font-size:11px;color:#111;left:1043.00px;width:100px;text-align:right;">3 000,00</div>
<div class="t " style="top:1159.69px;font-size:11px;color:#111;left:1150px;">ft2</div>
<svg class="r" style="left:1215px;top:1159px;" width="13" height="13" viewBox="0 0 13 13"><rect x="0.5" y="0.5" width="12" height="12" fill="#f4f5f8" stroke="#8a8f9a"/><path d="M3,6.5 L5.5,10 L10,2.5" stroke="#2b4aa0" stroke-width="1.6" fill="none"/></svg>
<div class="r" style="left:671px;top:1175px;width:685px;height:20px;background:#fff;"></div>
<div class="r" style="left:1058px;top:1175px;width:88px;height:20px;background:#fdf6e2;"></div>
<div class="r" style="left:671px;top:1195px;width:685px;height:1px;background:#ececec;"></div>
<div class="r" style="left:651px;top:1175px;width:20px;height:1px;background:#c8c8c8;"></div>
<div class="t " style="top:1179.69px;font-size:11px;color:#111;left:675px;">SurfPaint-s</div>
<div class="t " style="top:1179.69px;font-size:11px;color:#111;left:793px;">Surface Paint (sum)</div>
<div class="r" style="left:1008px;top:1176px;width:50px;height:19px;overflow:hidden;"><div class="t" style="left:4px;top:3.69px;font-size:11px;color:#111;">Validatio</div></div>
<div class="t u" style="top:1179.69px;font-size:11px;color:#111;left:1043.00px;width:100px;text-align:right;">3 000,00</div>
<div class="t " style="top:1179.69px;font-size:11px;color:#111;left:1150px;">ft2</div>
<svg class="r" style="left:1215px;top:1179px;" width="13" height="13" viewBox="0 0 13 13"><rect x="0.5" y="0.5" width="12" height="12" fill="#f4f5f8" stroke="#8a8f9a"/><path d="M3,6.5 L5.5,10 L10,2.5" stroke="#2b4aa0" stroke-width="1.6" fill="none"/></svg>
<div class="r" style="left:789px;top:1055px;width:1px;height:120px;background:#e6e6e6;"></div>
<div class="r" style="left:1008px;top:1055px;width:1px;height:120px;background:#e6e6e6;"></div>
<div class="r" style="left:1058px;top:1055px;width:1px;height:120px;background:#e6e6e6;"></div>
<div class="r" style="left:1146px;top:1055px;width:1px;height:120px;background:#e6e6e6;"></div>
<div class="r" style="left:1196px;top:1055px;width:1px;height:120px;background:#e6e6e6;"></div>
<div class="r" style="left:1246px;top:1055px;width:1px;height:120px;background:#e6e6e6;"></div>
<div class="r" style="left:671px;top:1036px;width:1px;height:159px;background:#c8c8c8;"></div>
<div class="r" style="left:671px;top:1175px;width:686px;height:20px;background:none;box-sizing:border-box;border-top:2px solid #000;border-bottom:2px solid #000;border-right:1px solid #000;"></div>
<div class="r" style="left:651px;top:1195px;width:706px;height:1px;background:#777;"></div>
<div class="r" style="left:1356px;top:1016px;width:1px;height:180px;background:#777;"></div>
<div class="r" style="left:651px;top:1016px;width:1px;height:263px;background:#777;"></div>
<div class="r" style="left:2030px;top:954px;width:3px;height:325px;background:#000;"></div>
<div class="r" style="left:2039px;top:961px;width:56px;height:22px;background:#000;"></div>
<div class="t " style="top:967.11px;font-size:10.5px;color:#fff;left:2046px;">Formula</div>
<div class="t " style="top:967.11px;font-size:10.5px;color:#222;left:2103px;">Description</div>
<div class="r" style="left:2167px;top:962px;width:1px;height:21px;background:#333;"></div>
<div class="t " style="top:967.11px;font-size:10.5px;color:#222;left:2175px;">Takeoff</div>
<div class="r" style="left:2221px;top:962px;width:1px;height:21px;background:#333;"></div>
<div class="r" style="left:2039px;top:1002px;width:426px;height:277px;background:none;box-sizing:border-box;border-top:1px solid #a8a8a8;border-left:1px solid #a8a8a8;"></div>
<div class="t " style="top:1023.11px;font-size:10.5px;color:#333;left:2099px;">Setting :</div>
<div class="r" style="left:2169px;top:1021px;width:296px;height:18px;background:#fff;box-sizing:border-box;border-top:1px solid #bbb;border-left:1px solid #888;"></div>
<div class="t " style="top:1025.11px;font-size:10.5px;color:#222;left:2172px;">Surface Paint (sum)</div>
<div class="t " style="top:1047.11px;font-size:10.5px;color:#333;left:2099px;">Of item :</div>
<div class="r" style="left:2169px;top:1045px;width:296px;height:18px;background:#fff;box-sizing:border-box;border-top:1px solid #bbb;border-left:1px solid #888;"></div>
<div class="t " style="top:1049.11px;font-size:10.5px;color:#222;left:2172px;">06 Int. Partitions</div>
<div class="r" style="left:2100px;top:1076px;width:358px;height:52px;background:none;box-sizing:border-box;border:1px solid #b8b8b8;"></div>
<div class="r" style="left:2108px;top:1070px;width:32px;height:12px;background:#fff;"></div>
<div class="t " style="top:1071.11px;font-size:10.5px;color:#333;left:2110px;">Value</div>
<svg class="r" style="left:2115px;top:1086px;" width="12" height="12" viewBox="0 0 12 12"><circle cx="6" cy="6" r="5.2" fill="#fff" stroke="#8a8a8a"/></svg>
<div class="t " style="top:1087.11px;font-size:10.5px;color:#333;left:2133px;">Manual</div>
<svg class="r" style="left:2115px;top:1108px;" width="12" height="12" viewBox="0 0 12 12"><circle cx="6" cy="6" r="5.2" fill="#fff" stroke="#8a8a8a"/><circle cx="6" cy="6" r="2.2" fill="#111"/></svg>
<div class="t " style="top:1109.11px;font-size:10.5px;color:#333;left:2133px;">Formula</div>
<div class="r" style="left:2195px;top:1082px;width:132px;height:18px;background:#efefef;box-sizing:border-box;border:1px solid #bdbdbd;"></div>
<div class="r" style="left:2340px;top:1082px;width:88px;height:18px;background:#fff;box-sizing:border-box;border:1px solid #bdbdbd;"></div>
<div class="r" style="left:2428px;top:1081px;width:21px;height:19px;background:#f4f4f4;box-sizing:border-box;border:1px solid #aaa;border-right:2px solid #777;border-bottom:2px solid #777;"></div>
<div class="t " style="top:1086.54px;font-size:10px;color:#999;left:2428.00px;width:20px;text-align:center;">...</div>
<div class="r" style="left:2195px;top:1104px;width:132px;height:18px;background:#fff;box-sizing:border-box;border:1px solid #bdbdbd;"></div>
<div class="t " style="top:1107.69px;font-size:11px;color:#111;left:2197px;">3000</div>
<div class="r" style="left:2340px;top:1104px;width:88px;height:18px;background:#fff;box-sizing:border-box;border:1px solid #bdbdbd;"></div>
<div class="t " style="top:1107.69px;font-size:11px;color:#111;left:2342px;">ft2</div>
<div class="r" style="left:2428px;top:1103px;width:21px;height:19px;background:#f4f4f4;box-sizing:border-box;border:1px solid #aaa;border-right:2px solid #777;border-bottom:2px solid #777;"></div>
<div class="t " style="top:1107.69px;font-size:11px;color:#222;font-weight:bold;left:2428.00px;width:20px;text-align:center;">...</div>
<svg class="r" style="left:2057px;top:1110px;" width="17" height="13" viewBox="0 0 17 13"><path d="M1,6.5 L15,6.5 M9,1 L15,6.5 L9,12" stroke="#555" stroke-width="1.6" fill="none"/></svg>
<div class="r" style="left:2098px;top:1133px;width:367px;height:31px;background:#fff;box-sizing:border-box;border-top:2px solid #777;border-left:2px solid #777;border-bottom:1px solid #ddd;"></div>
<svg class="r" style="left:2105px;top:1140px;" width="20" height="20" viewBox="0 0 24 24"><path d="M1,23 L3,16 L17,2 C18.5,0.5 20.5,0.5 22,2 C23.5,3.5 23.5,5.5 22,7 L8,21Z" fill="#12202c"/><path d="M4.5,16.5 L7.5,19.5" stroke="#fff" stroke-width="1"/><path d="M15,4 L20,9" stroke="#fff" stroke-width="1"/></svg>
<svg class="r" style="left:2139px;top:1142px;" width="17" height="17" viewBox="0 0 18 18"><path d="M1,1 L14,1 L17,4 L17,17 L1,17Z" stroke="#666" stroke-width="1.8" fill="none"/><rect x="4" y="1" width="9" height="6" fill="#666"/><rect x="9.5" y="2" width="2" height="4" fill="#fff"/></svg>
<svg class="r" style="left:2170px;top:1139px;" width="19" height="21" viewBox="0 0 19 21"><path d="M1,1 L1,20 L18,20 L18,6 L13,1Z M13,1 L13,6 L18,6" stroke="#777" stroke-width="1.4" fill="none" stroke-linejoin="round"/><text x="4" y="18" font-size="14" font-family="Liberation Serif" fill="#777">x</text></svg>
<svg class="r" style="left:2202px;top:1139px;" width="18" height="21" viewBox="0 0 18 21"><path d="M4,3 L4,20 L17,20 L17,8 L12,3Z M12,3 L12,8 L17,8" stroke="#999" stroke-width="1.5" fill="#fff" stroke-linejoin="round"/><path d="M1,17 L1,2 C1,1 1.5,0 3,0 L10,0" stroke="#999" stroke-width="1.3" fill="none"/></svg>
<svg class="r" style="left:2235px;top:1140px;" width="17" height="20" viewBox="0 0 17 20"><rect x="1" y="3" width="11" height="15" stroke="#9a9a9a" stroke-width="1.4" fill="none"/><rect x="4" y="1" width="5" height="4" stroke="#9a9a9a" stroke-width="1.3" fill="#fff"/><path d="M6,9 L6,19 L16,19 L16,11 L14,9Z" stroke="#9a9a9a" stroke-width="1.4" fill="#fff"/></svg>
<svg class="r" style="left:2268px;top:1142px;" width="15" height="16" viewBox="0 0 17 16"><path d="M0,8 L7,1 L7,5 C13,5 17,9 16,16 C14,11 11,10 7,10 L7,14Z" fill="#666"/></svg>
<svg class="r" style="left:2303px;top:1141px;" width="18" height="18" viewBox="0 0 18 18"><text x="0" y="15" font-size="17" font-style="italic" font-family="Liberation Serif" fill="#999">fx</text></svg>
<svg class="r" style="left:2333px;top:1140px;" width="20" height="18" viewBox="0 0 20 18"><text x="0" y="14" font-size="15" font-family="Liberation Serif" fill="#a0a0a0">&#8220;T&#8221;</text></svg>
<svg class="r" style="left:2365px;top:1146px;" width="20" height="8" viewBox="0 0 20 8"><rect x="0" y="3" width="20" height="4" fill="#666"/><path d="M2,3 v-2 M5,3 v-2 M8,3 v-2 M11,3 v-2 M14,3 v-2 M17,3 v-2" stroke="#fff" stroke-width="0.8"/></svg>
<svg class="r" style="left:2397px;top:1140px;" width="20" height="21" viewBox="0 0 20 21"><path d="M1,19 L1,1 L13,1 L19,7 L19,19" stroke="#222" stroke-width="1.6" fill="none"/><path d="M13,1 L13,7 L19,7" stroke="#222" stroke-width="1.3" fill="none"/><rect x="0" y="17" width="20" height="3" fill="#222"/><path d="M3,17 v-2 M6,17 v-2 M9,17 v-2 M12,17 v-2 M15,17 v-2" stroke="#222" stroke-width="1"/></svg>
<div class="r" style="left:2098px;top:1166px;width:367px;height:113px;background:#fff;box-sizing:border-box;border-top:2px solid #777;border-left:2px solid #777;"></div>
<div class="t" style="left:2101px;top:1170px;font-family:'Liberation Mono',monospace;font-size:13px;line-height:1;"><span style="color:#1c1cc8">sum(</span><span style="color:#3a3aff">[SurfPaint-s]</span><span style="color:#555">)</span></div>
<svg class="r" style="left:0;top:0;" width="2474" height="1289" viewBox="0 0 2474 1289"><defs><filter id="sh" x="-20%" y="-20%" width="140%" height="140%"><feDropShadow dx="2" dy="2.5" stdDeviation="1.6" flood-color="#000" flood-opacity="0.45"/></filter></defs><g filter="url(#sh)" fill="none" stroke="#861a1c" stroke-width="3"><ellipse cx="1490.6" cy="521.4" rx="69.7" ry="16.6" transform="rotate(2 1490.6 521.4)"/><ellipse cx="2069.5" cy="572" rx="73" ry="60.5"/><ellipse cx="2170.7" cy="1157.6" rx="100.3" ry="40.2" transform="rotate(2 2170.7 1157.6)"/><path d="M1560,526.5 L1986,579.2" stroke-width="2.6"/><path d="M2095,631 L2151.3,1100" stroke-width="2.4"/></g><g filter="url(#sh)" fill="#861a1c" stroke="none"><path d="M1998,580.7 L1984.6,573.4 L1983.2,584.8Z"/><path d="M2152.5,1111.5 L2145.6,1098.5 L2157.4,1097.1Z"/></g></svg>
<div class="r" style="left:0px;top:0px;width:2474px;height:5px;background:#000;"></div>
<div class="r" style="left:0px;top:0px;width:5px;height:1289px;background:#000;"></div>
<div class="r" style="left:2465px;top:0px;width:9px;height:1289px;background:#000;"></div>
<div class="r" style="left:0px;top:1279px;width:2474px;height:10px;background:#000;"></div>
</body></html>
